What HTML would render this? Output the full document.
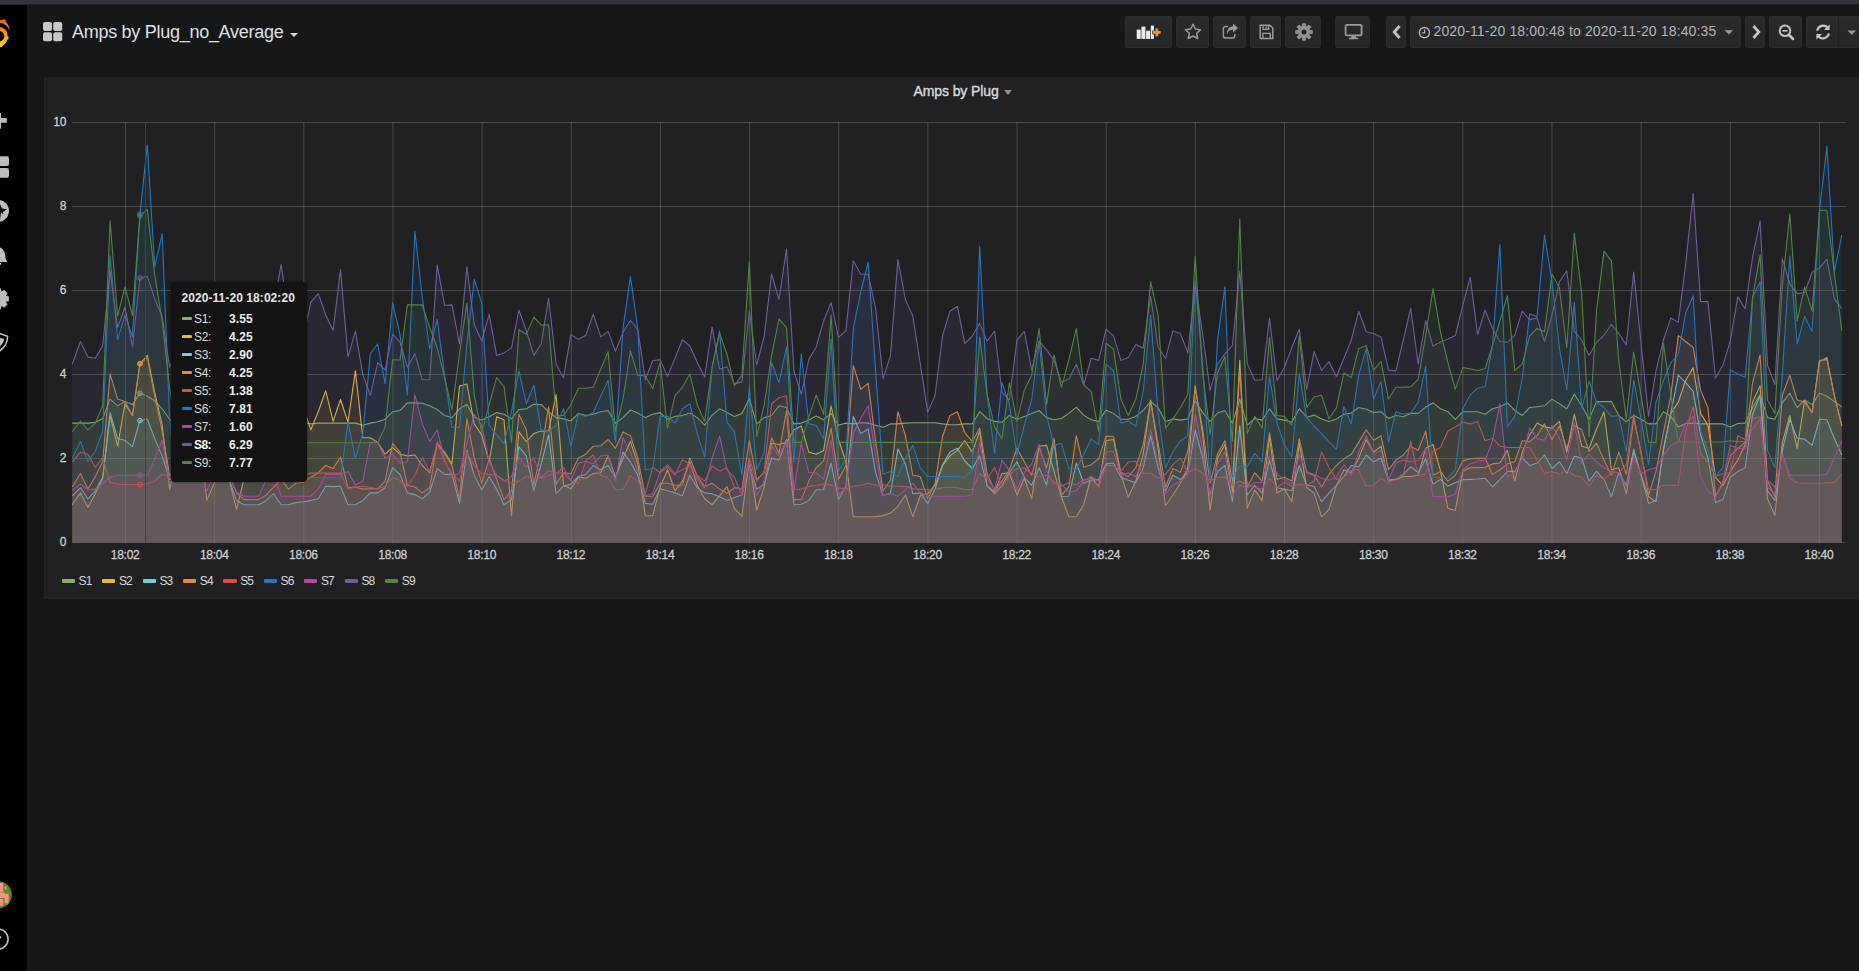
<!DOCTYPE html>
<html lang="en">
<head>
<meta charset="utf-8">
<title>Amps by Plug_no_Average - Grafana</title>
<style>
*{box-sizing:border-box;margin:0;padding:0}
html,body{width:1859px;height:971px;overflow:hidden;background:#161719;font-family:"Liberation Sans",sans-serif;color:#d8d9da}
.abs{position:absolute}
#topstrip{position:absolute;left:0;top:0;width:1859px;height:5px;background:#34353a;border-bottom:1px solid #232428}
#side{position:absolute;left:0;top:5px;width:27px;height:966px;background:#000;overflow:hidden}
#side svg{position:absolute;left:0;top:-5px}
#nav-title{position:absolute;left:72px;top:21px;font-size:18px;line-height:22px;color:#dfe0e1;white-space:nowrap;letter-spacing:-0.28px}
.caret{position:absolute;width:0;height:0;border-left:4px solid transparent;border-right:4px solid transparent;border-top:4px solid #d8d9da}
.btn{position:absolute;top:16px;height:32px;border-radius:2px;background:linear-gradient(180deg,#2b2b2e,#262629);border:1px solid #2c2c30}
.btn svg{position:absolute;left:0;top:-0.7px}
#tp-text{position:absolute;left:22.5px;top:5px;font-size:14px;line-height:18px;color:#b4b5b8;white-space:nowrap;letter-spacing:0.13px}
#panel{position:absolute;left:44px;top:77px;width:1830px;height:522px;background:#212124;border:1px solid #242427;border-top-color:#202023;border-radius:0}
#ptitle{position:absolute;left:913.5px;top:83px;font-size:14px;line-height:17px;font-weight:normal;-webkit-text-stroke:0.38px #dadbdc;color:#dadbdc;white-space:nowrap;letter-spacing:-0.1px}
.chart{position:absolute;left:0;top:0}
.lg{position:absolute;top:574px;height:15px;white-space:nowrap}
.lg i{position:absolute;left:-0.3px;top:5.2px;width:13.4px;height:3.7px;border-radius:1px}
.lg span{position:absolute;left:16.6px;top:0;font-size:12px;line-height:15px;color:#d8d9da;letter-spacing:-0.9px}
.tip{position:absolute;left:171px;top:282px;width:136px;height:200px;background:#141414;border-radius:4px;box-shadow:0 0 3px rgba(0,0,0,.5)}
.tt{position:absolute;left:10.5px;top:8px;font-size:12px;line-height:16px;font-weight:bold;color:#e6e6e6;white-space:nowrap;letter-spacing:0.07px}
.tr{position:absolute;left:0;width:136px;height:18px}
.tr i{position:absolute;left:11px;top:7px;width:10px;height:3px;border-radius:1px}
.tr span{position:absolute;left:23px;top:1px;font-size:12px;line-height:16px;color:#d8d9da;letter-spacing:-0.3px}
.tr span.hl{font-weight:bold;color:#fff;letter-spacing:-0.6px}
.tr b{position:absolute;left:58px;top:1px;font-size:12px;line-height:16px;color:#ececec;letter-spacing:0.1px}
</style>
</head>
<body>
<div id="topstrip"></div>

<!-- side menu (cropped by viewport in the original capture) -->
<div id="side">
<svg width="27" height="971" viewBox="0 0 27 971">
  <defs>
    <linearGradient id="lg1" gradientUnits="userSpaceOnUse" x1="0" y1="47" x2="0" y2="19">
      <stop offset="0" stop-color="#fdd216"/><stop offset="0.5" stop-color="#f7941d"/><stop offset="1" stop-color="#f05a28"/>
    </linearGradient>
  </defs>
  <!-- grafana logo, right part -->
  <path d="M-3 26.6 C2 26.6 6 29 7.1 32.4 L7.5 35.4 L9 37.8 L6.9 40.4 C6.2 42.8 4.6 44.4 3.1 45.3 L1.8 47 L-3 47.3 L-3 42.3 C1.5 41.6 4.3 39.6 4.3 36.6 C4.3 33 1 30.2 -3 30 Z" fill="url(#lg1)"/>
  <path d="M-3 19.9 L2.4 19.9 L5 19.1 L6 22 C8 24.4 9.3 27 9.6 30.4 C8 27.2 5.5 24.2 2 23.1 L-3 22.9 Z" fill="url(#lg1)"/>
  <!-- plus -->
  <path d="M-8 118 h14.8 v4.7 h-14.8z M-3.4 113 h4.5 v15.7 h-4.5z" fill="#bdbdbd"/>
  <!-- dashboards squares -->
  <rect x="-10" y="156.2" width="19" height="9.7" rx="2" fill="#bdbdbd"/>
  <rect x="-10" y="168" width="19" height="9.7" rx="2" fill="#bdbdbd"/>
  <!-- compass -->
  <circle cx="-2.1" cy="210.8" r="11.1" fill="#bdbdbd"/>
  <path d="M0.2 204.6 L2 208.6 L7 209.2 L2.8 212 L3.8 214.8 L1 212.6 L0 220.6 L-3 212 L-6 210 L-1.5 208.8 Z" fill="#0a0a0a"/>
  <!-- bell -->
  <path d="M-6 246 C1.5 246 4.8 250 5.3 256 C5.5 259 6 260.2 7 261 V262 H-8 Z" fill="#bdbdbd"/>
  <rect x="-3" y="263" width="4" height="1.8" fill="#bdbdbd"/>
  <!-- cog -->
  <g transform="translate(-1.5 298.8)" fill="#bdbdbd">
    <circle r="7.8"/>
    <path d="M-2.4 -10.4 h4.8 l0.8 4 h-6.4z" transform="rotate(0)"/><path d="M-2.4 -10.4 h4.8 l0.8 4 h-6.4z" transform="rotate(45)"/><path d="M-2.4 -10.4 h4.8 l0.8 4 h-6.4z" transform="rotate(90)"/><path d="M-2.4 -10.4 h4.8 l0.8 4 h-6.4z" transform="rotate(135)"/><path d="M-2.4 -10.4 h4.8 l0.8 4 h-6.4z" transform="rotate(180)"/>
  </g>
  <!-- shield -->
  <path d="M-6 331.6 L7.6 336.2 C7.6 343.5 4 349 -4 353.4" fill="none" stroke="#bdbdbd" stroke-width="1.5"/>
  <path d="M-6 336.6 L4.2 338.8 C3.8 342.6 1.6 345.4 -3 348.6 z" fill="#bdbdbd"/>
  <!-- avatar -->
  <clipPath id="av"><circle cx="-2" cy="894.8" r="13.8"/></clipPath>
  <g clip-path="url(#av)">
    <rect x="-16" y="880" width="29" height="30" fill="#5c8a1a"/>
    <path d="M0 883 h3.2 v9 h-3.2z M4.6 893.8 h4 v9.4 h-4z M0 892.5 h4.6 v5.5 h-4.6z M-3 899 h6.2 v7 h-6.2z M-5 886 h3.4 v10 h-3.4z M4.6 886.5 h2 v3 h-2z" fill="#ff8d84"/>
  </g>
  <!-- help -->
  <circle cx="-1.9" cy="939.1" r="10" fill="none" stroke="#bdbdbd" stroke-width="1.6"/>
  <circle cx="-0.4" cy="937.2" r="1.5" fill="#bdbdbd"/>
</svg>
</div>

<!-- navbar -->
<svg class="abs" style="left:43px;top:22px" width="20" height="20" viewBox="0 0 20 20">
  <g fill="#c8c8c8"><rect x="0" y="0" width="9" height="9" rx="2"/><rect x="10.2" y="0" width="9" height="9" rx="2"/><rect x="0" y="10.2" width="9" height="9" rx="2"/><rect x="10.2" y="10.2" width="9" height="9" rx="2"/></g>
</svg>
<div id="nav-title">Amps by Plug_no_Average</div>
<div class="caret" style="left:290px;top:33px"></div>

<!-- add panel -->
<div class="btn" style="left:1125px;width:47px">
<svg width="47" height="32" viewBox="0 0 47 32">
  <g fill="#e9e9e9" transform="translate(-0.5 0)"><rect x="11.2" y="13.6" width="4" height="9.3"/><rect x="15.9" y="10.6" width="4" height="12.3"/><rect x="20.6" y="14.7" width="4" height="8.2"/><rect x="25.3" y="9.6" width="3.2" height="13.3"/></g>
  <path d="M27 15.1 h2.5 v-2.5 h2.7 v2.5 h2.5 v2.7 h-2.5 v2.5 h-2.7 v-2.5 h-2.5z" fill="#f79520" stroke="#28282b" stroke-width="1.4" paint-order="stroke"/>
</svg></div>
<!-- star -->
<div class="btn" style="left:1176px;width:33px">
<svg width="33" height="32" viewBox="0 0 33 32">
  <path d="M16 8.2 L18.3 13 L23.5 13.7 L19.7 17.3 L20.7 22.5 L16 20 L11.3 22.5 L12.3 17.3 L8.5 13.7 L13.7 13 Z" fill="none" stroke="#9a9b9e" stroke-width="1.5" stroke-linejoin="round"/>
</svg></div>
<!-- share -->
<div class="btn" style="left:1213px;width:33px">
<svg width="33" height="32" viewBox="0 0 33 32">
  <path d="M13.5 10.4 H11.6 a2.2 2.2 0 0 0 -2.2 2.2 V19.8 a2.2 2.2 0 0 0 2.2 2.2 H18.6 a2.2 2.2 0 0 0 2.2 -2.2 V18.6" fill="none" stroke="#9a9b9e" stroke-width="1.5" stroke-linecap="round"/>
  <path d="M19 7.6 L24 12 L19 16.4 V13.8 C16 13.8 14 15 13 18.4 C12.6 14 15 10.4 19 10.2 Z" fill="#9a9b9e"/>
</svg></div>
<!-- save -->
<div class="btn" style="left:1250px;width:31px">
<svg width="31" height="32" viewBox="0 0 31 32">
  <path d="M9.2 9.2 H19 L21.8 12 V22.4 H9.2 Z" fill="none" stroke="#9a9b9e" stroke-width="1.5" stroke-linejoin="round"/>
  <path d="M12 9.4 V13.4 H17.6 V9.4 M15.2 10.4 v2" fill="none" stroke="#9a9b9e" stroke-width="1.4"/>
  <path d="M11.8 22.2 V17.4 H19.2 V22.2" fill="none" stroke="#9a9b9e" stroke-width="1.4"/>
</svg></div>
<!-- cog -->
<div class="btn" style="left:1285px;width:36px">
<svg width="36" height="32" viewBox="0 0 36 32">
  <g transform="translate(18 16)">
    <g fill="#8e8f92">
      <circle r="6.2"/>
      <rect x="-1.9" y="-8.8" width="3.8" height="4" rx="0.6" transform="rotate(0)"/><rect x="-1.9" y="-8.8" width="3.8" height="4" rx="0.6" transform="rotate(45)"/><rect x="-1.9" y="-8.8" width="3.8" height="4" rx="0.6" transform="rotate(90)"/><rect x="-1.9" y="-8.8" width="3.8" height="4" rx="0.6" transform="rotate(135)"/><rect x="-1.9" y="-8.8" width="3.8" height="4" rx="0.6" transform="rotate(180)"/><rect x="-1.9" y="-8.8" width="3.8" height="4" rx="0.6" transform="rotate(225)"/><rect x="-1.9" y="-8.8" width="3.8" height="4" rx="0.6" transform="rotate(270)"/><rect x="-1.9" y="-8.8" width="3.8" height="4" rx="0.6" transform="rotate(315)"/>
    </g>
    <circle r="2.5" fill="#28282b"/>
  </g>
</svg></div>
<!-- tv -->
<div class="btn" style="left:1335px;width:35px">
<svg width="35" height="32" viewBox="0 0 35 32">
  <rect x="9.6" y="8.8" width="16" height="10.6" rx="1.2" fill="none" stroke="#9a9b9e" stroke-width="1.8"/>
  <path d="M15.6 19.6 h4 l0.6 2.2 h2 v1.4 h-9.2 v-1.4 h2 z" fill="#9a9b9e"/>
</svg></div>
<!-- left -->
<div class="btn" style="left:1386px;width:20px">
<svg width="20" height="32" viewBox="0 0 20 32">
  <path d="M12.6 10 L7.2 16 L12.6 22" fill="none" stroke="#c3c4c6" stroke-width="2.8"/>
</svg></div>
<!-- time picker -->
<div class="btn" style="left:1410px;width:331px">
<svg width="331" height="32" viewBox="0 0 331 32">
  <circle cx="13.4" cy="16.6" r="5.1" fill="none" stroke="#b4b5b8" stroke-width="1.4"/>
  <path d="M13.6 13.4 V16.8 H11" fill="none" stroke="#b4b5b8" stroke-width="1.2"/>
  <path d="M313.6 14.2 h8.4 l-4.2 4.4z" fill="#9a9b9e"/>
</svg>
<div id="tp-text">2020-11-20 18:00:48 to 2020-11-20 18:40:35</div>
</div>
<!-- right -->
<div class="btn" style="left:1745px;width:20px">
<svg width="20" height="32" viewBox="0 0 20 32">
  <path d="M7.4 10 L12.8 16 L7.4 22" fill="none" stroke="#c3c4c6" stroke-width="2.8"/>
</svg></div>
<!-- zoom out -->
<div class="btn" style="left:1769px;width:33px">
<svg width="33" height="32" viewBox="0 0 33 32">
  <circle cx="15" cy="14.8" r="5.3" fill="none" stroke="#c3c4c6" stroke-width="2"/>
  <path d="M12.4 14.8 h5.2" stroke="#c3c4c6" stroke-width="1.6"/>
  <path d="M19 19 L23 23" stroke="#c3c4c6" stroke-width="2.6" stroke-linecap="round"/>
</svg></div>
<!-- refresh -->
<div class="btn" style="left:1806px;width:60px;border-radius:2px 0 0 2px">
<svg width="60" height="32" viewBox="0 0 60 32">
  <path d="M10.2 14.6 A6 6 0 0 1 20.6 11.6" fill="none" stroke="#c3c4c6" stroke-width="2.2"/>
  <path d="M22.6 8.4 V14 H17 Z" fill="#c3c4c6"/>
  <path d="M21.8 17.4 A6 6 0 0 1 11.4 20.4" fill="none" stroke="#c3c4c6" stroke-width="2.2"/>
  <path d="M9.4 23.6 V18 H15 Z" fill="#c3c4c6"/>
  <rect x="31" y="0" width="1" height="32" fill="#202023"/>
  <path d="M40.6 14.4 h8.4 l-4.2 4.4z" fill="#9a9b9e"/>
</svg></div>

<!-- panel -->
<div id="panel"></div>
<div id="ptitle">Amps by Plug</div>
<div class="caret" style="left:1003.7px;top:90px;border-left-width:4.8px;border-right-width:4.8px;border-top:5px solid #8e8e8e"></div>
<svg class="chart" width="1859" height="971" viewBox="0 0 1859 971">
<g stroke="#ffffff" stroke-opacity="0.19" stroke-width="1" shape-rendering="auto"><line x1="72.0" y1="122.5" x2="1846.0" y2="122.5"/><line x1="72.0" y1="206.5" x2="1846.0" y2="206.5"/><line x1="72.0" y1="290.5" x2="1846.0" y2="290.5"/><line x1="72.0" y1="374.5" x2="1846.0" y2="374.5"/><line x1="72.0" y1="458.5" x2="1846.0" y2="458.5"/><line x1="72.0" y1="542.5" x2="1846.0" y2="542.5"/><line x1="125.50" y1="122" x2="125.50" y2="543"/><line x1="214.66" y1="122" x2="214.66" y2="543"/><line x1="303.81" y1="122" x2="303.81" y2="543"/><line x1="392.97" y1="122" x2="392.97" y2="543"/><line x1="482.12" y1="122" x2="482.12" y2="543"/><line x1="571.27" y1="122" x2="571.27" y2="543"/><line x1="660.43" y1="122" x2="660.43" y2="543"/><line x1="749.59" y1="122" x2="749.59" y2="543"/><line x1="838.74" y1="122" x2="838.74" y2="543"/><line x1="927.89" y1="122" x2="927.89" y2="543"/><line x1="1017.05" y1="122" x2="1017.05" y2="543"/><line x1="1106.20" y1="122" x2="1106.20" y2="543"/><line x1="1195.36" y1="122" x2="1195.36" y2="543"/><line x1="1284.52" y1="122" x2="1284.52" y2="543"/><line x1="1373.67" y1="122" x2="1373.67" y2="543"/><line x1="1462.83" y1="122" x2="1462.83" y2="543"/><line x1="1551.98" y1="122" x2="1551.98" y2="543"/><line x1="1641.13" y1="122" x2="1641.13" y2="543"/><line x1="1730.29" y1="122" x2="1730.29" y2="543"/><line x1="1819.44" y1="122" x2="1819.44" y2="543"/></g>
<clipPath id="pc"><rect x="72.0" y="118" width="1774.0" height="425"/></clipPath>
<g clip-path="url(#pc)" fill="none" stroke-width="1.1" stroke-linejoin="round">
<polygon points="72.2,542.5 72.2,423.1 80.4,423.1 87.9,423.1 95.3,422.2 102.7,418.5 110.1,399.1 117.6,405.8 125.0,401.6 132.4,404.6 139.9,393.2 147.3,396.2 154.7,400.8 162.2,408.8 169.6,419.3 177.0,422.7 184.5,422.7 191.9,422.7 199.3,422.7 206.8,422.7 214.2,422.7 221.6,422.7 229.1,422.7 236.5,422.7 243.9,422.7 251.4,422.7 258.8,422.7 266.2,422.7 273.7,422.7 281.1,422.7 288.5,422.7 295.9,422.7 303.4,422.7 310.8,423.9 318.2,423.1 325.7,423.1 333.1,423.1 340.5,423.1 348.0,423.1 355.4,423.1 362.8,425.2 370.3,423.1 377.7,421.8 385.1,419.3 392.6,411.7 400.0,410.5 407.4,402.9 414.9,402.9 422.3,403.3 429.7,405.8 437.2,409.6 444.6,415.5 452.0,417.6 459.5,408.8 466.9,404.6 474.3,417.6 481.7,420.1 489.2,416.8 496.6,412.6 504.0,414.2 511.5,418.9 518.9,409.6 526.3,408.8 533.8,404.2 541.2,404.6 548.6,411.7 556.1,417.6 563.5,418.9 570.9,421.0 578.4,413.4 585.8,415.5 593.2,414.2 600.7,411.7 608.1,410.5 615.5,423.1 623.0,417.6 630.4,410.0 637.8,413.0 645.3,417.6 652.7,414.2 660.1,412.6 667.5,419.3 675.0,416.4 682.4,415.5 689.8,413.0 697.3,417.6 704.7,425.2 712.1,415.1 719.6,408.8 727.0,412.6 734.4,416.4 741.9,413.4 749.3,399.1 756.7,423.9 764.2,417.6 771.6,415.5 779.0,405.8 786.5,407.5 793.9,423.9 801.3,423.1 808.8,420.1 816.2,415.9 823.6,419.7 831.1,413.4 838.5,425.2 845.9,423.1 853.3,423.9 860.8,422.7 868.2,423.1 875.6,425.2 883.1,427.3 890.5,423.9 897.9,423.9 905.4,423.1 912.8,422.7 920.2,422.7 927.7,422.7 935.1,422.7 942.5,423.9 950.0,424.8 957.4,424.8 964.8,423.9 972.3,423.9 979.7,411.7 987.1,418.5 994.6,421.4 1002.0,422.2 1009.4,415.5 1016.9,419.3 1024.3,416.4 1031.7,413.4 1039.1,410.5 1046.6,417.6 1054.0,419.7 1061.4,418.5 1068.9,413.4 1076.3,407.1 1083.7,415.1 1091.2,419.7 1098.6,421.4 1106.0,410.0 1113.5,413.4 1120.9,419.3 1128.3,419.3 1135.8,416.4 1143.2,410.5 1150.6,401.6 1158.1,407.5 1165.5,421.4 1172.9,418.9 1180.4,420.1 1187.8,418.9 1195.2,400.8 1202.7,412.6 1210.1,421.4 1217.5,413.0 1224.9,410.5 1232.4,423.1 1239.8,399.1 1247.2,425.2 1254.7,418.5 1262.1,420.1 1269.5,408.8 1277.0,418.9 1284.4,420.1 1291.8,422.2 1299.3,408.8 1306.7,417.2 1314.1,415.1 1321.6,418.9 1329.0,421.4 1336.4,418.9 1343.9,414.2 1351.3,413.0 1358.7,407.5 1366.2,409.2 1373.6,412.6 1381.0,411.7 1388.5,418.5 1395.9,415.5 1403.3,416.8 1410.7,413.4 1418.2,413.4 1425.6,407.1 1433.0,402.9 1440.5,408.8 1447.9,411.7 1455.3,419.3 1462.8,411.7 1470.2,411.7 1477.6,411.7 1485.1,414.2 1492.5,408.8 1499.9,406.7 1507.4,402.9 1514.8,410.5 1522.2,415.5 1529.7,407.5 1537.1,406.7 1544.5,405.8 1552.0,399.1 1559.4,403.7 1566.8,408.8 1574.3,394.1 1581.7,405.8 1589.1,419.3 1596.5,401.6 1604.0,401.6 1611.4,401.6 1618.8,415.5 1626.3,421.8 1633.7,415.5 1641.1,419.3 1648.6,423.9 1656.0,423.9 1663.4,411.7 1670.9,416.4 1678.3,426.9 1685.7,423.5 1693.2,423.1 1700.6,423.9 1708.0,423.9 1715.5,423.9 1722.9,423.9 1730.3,426.9 1737.8,423.5 1745.2,423.1 1752.6,407.5 1760.1,394.9 1767.5,417.6 1774.9,419.3 1782.3,402.9 1789.8,393.2 1797.2,407.5 1804.6,400.0 1812.1,404.6 1819.5,393.2 1826.9,396.2 1834.4,401.6 1841.8,406.7 1841.8,542.5" fill="#7EB26D" fill-opacity="0.105" stroke="none"/>
<polyline points="72.2,423.1 80.4,423.1 87.9,423.1 95.3,422.2 102.7,418.5 110.1,399.1 117.6,405.8 125.0,401.6 132.4,404.6 139.9,393.2 147.3,396.2 154.7,400.8 162.2,408.8 169.6,419.3 177.0,422.7 184.5,422.7 191.9,422.7 199.3,422.7 206.8,422.7 214.2,422.7 221.6,422.7 229.1,422.7 236.5,422.7 243.9,422.7 251.4,422.7 258.8,422.7 266.2,422.7 273.7,422.7 281.1,422.7 288.5,422.7 295.9,422.7 303.4,422.7 310.8,423.9 318.2,423.1 325.7,423.1 333.1,423.1 340.5,423.1 348.0,423.1 355.4,423.1 362.8,425.2 370.3,423.1 377.7,421.8 385.1,419.3 392.6,411.7 400.0,410.5 407.4,402.9 414.9,402.9 422.3,403.3 429.7,405.8 437.2,409.6 444.6,415.5 452.0,417.6 459.5,408.8 466.9,404.6 474.3,417.6 481.7,420.1 489.2,416.8 496.6,412.6 504.0,414.2 511.5,418.9 518.9,409.6 526.3,408.8 533.8,404.2 541.2,404.6 548.6,411.7 556.1,417.6 563.5,418.9 570.9,421.0 578.4,413.4 585.8,415.5 593.2,414.2 600.7,411.7 608.1,410.5 615.5,423.1 623.0,417.6 630.4,410.0 637.8,413.0 645.3,417.6 652.7,414.2 660.1,412.6 667.5,419.3 675.0,416.4 682.4,415.5 689.8,413.0 697.3,417.6 704.7,425.2 712.1,415.1 719.6,408.8 727.0,412.6 734.4,416.4 741.9,413.4 749.3,399.1 756.7,423.9 764.2,417.6 771.6,415.5 779.0,405.8 786.5,407.5 793.9,423.9 801.3,423.1 808.8,420.1 816.2,415.9 823.6,419.7 831.1,413.4 838.5,425.2 845.9,423.1 853.3,423.9 860.8,422.7 868.2,423.1 875.6,425.2 883.1,427.3 890.5,423.9 897.9,423.9 905.4,423.1 912.8,422.7 920.2,422.7 927.7,422.7 935.1,422.7 942.5,423.9 950.0,424.8 957.4,424.8 964.8,423.9 972.3,423.9 979.7,411.7 987.1,418.5 994.6,421.4 1002.0,422.2 1009.4,415.5 1016.9,419.3 1024.3,416.4 1031.7,413.4 1039.1,410.5 1046.6,417.6 1054.0,419.7 1061.4,418.5 1068.9,413.4 1076.3,407.1 1083.7,415.1 1091.2,419.7 1098.6,421.4 1106.0,410.0 1113.5,413.4 1120.9,419.3 1128.3,419.3 1135.8,416.4 1143.2,410.5 1150.6,401.6 1158.1,407.5 1165.5,421.4 1172.9,418.9 1180.4,420.1 1187.8,418.9 1195.2,400.8 1202.7,412.6 1210.1,421.4 1217.5,413.0 1224.9,410.5 1232.4,423.1 1239.8,399.1 1247.2,425.2 1254.7,418.5 1262.1,420.1 1269.5,408.8 1277.0,418.9 1284.4,420.1 1291.8,422.2 1299.3,408.8 1306.7,417.2 1314.1,415.1 1321.6,418.9 1329.0,421.4 1336.4,418.9 1343.9,414.2 1351.3,413.0 1358.7,407.5 1366.2,409.2 1373.6,412.6 1381.0,411.7 1388.5,418.5 1395.9,415.5 1403.3,416.8 1410.7,413.4 1418.2,413.4 1425.6,407.1 1433.0,402.9 1440.5,408.8 1447.9,411.7 1455.3,419.3 1462.8,411.7 1470.2,411.7 1477.6,411.7 1485.1,414.2 1492.5,408.8 1499.9,406.7 1507.4,402.9 1514.8,410.5 1522.2,415.5 1529.7,407.5 1537.1,406.7 1544.5,405.8 1552.0,399.1 1559.4,403.7 1566.8,408.8 1574.3,394.1 1581.7,405.8 1589.1,419.3 1596.5,401.6 1604.0,401.6 1611.4,401.6 1618.8,415.5 1626.3,421.8 1633.7,415.5 1641.1,419.3 1648.6,423.9 1656.0,423.9 1663.4,411.7 1670.9,416.4 1678.3,426.9 1685.7,423.5 1693.2,423.1 1700.6,423.9 1708.0,423.9 1715.5,423.9 1722.9,423.9 1730.3,426.9 1737.8,423.5 1745.2,423.1 1752.6,407.5 1760.1,394.9 1767.5,417.6 1774.9,419.3 1782.3,402.9 1789.8,393.2 1797.2,407.5 1804.6,400.0 1812.1,404.6 1819.5,393.2 1826.9,396.2 1834.4,401.6 1841.8,406.7" stroke="#7EB26D"/>
<polygon points="72.2,542.5 72.2,504.7 80.4,492.9 87.9,507.2 95.3,493.7 102.7,478.2 110.1,415.5 117.6,446.2 125.0,403.7 132.4,415.5 139.9,363.8 147.3,355.4 154.7,392.0 162.2,425.2 169.6,489.1 177.0,458.4 184.5,437.4 191.9,450.0 199.3,433.2 206.8,500.4 214.2,483.2 221.6,437.4 229.1,479.4 236.5,509.3 243.9,479.4 251.4,424.8 258.8,416.4 266.2,433.2 273.7,412.1 281.1,429.0 288.5,403.7 295.9,420.6 303.4,407.9 310.8,429.8 318.2,411.7 325.7,390.7 333.1,421.4 340.5,399.5 348.0,422.2 355.4,370.9 362.8,437.8 370.3,437.8 377.7,442.4 385.1,454.2 392.6,447.5 400.0,454.2 407.4,455.9 414.9,455.0 422.3,465.5 429.7,472.7 437.2,444.5 444.6,452.1 452.0,463.9 459.5,386.1 466.9,384.0 474.3,423.9 481.7,434.9 489.2,461.8 496.6,416.8 504.0,419.7 511.5,516.0 518.9,431.9 526.3,441.6 533.8,433.6 541.2,431.1 548.6,431.1 556.1,394.5 563.5,484.9 570.9,488.7 578.4,476.9 585.8,478.2 593.2,473.5 600.7,472.7 608.1,455.9 615.5,477.3 623.0,458.0 630.4,441.6 637.8,463.9 645.3,516.0 652.7,515.6 660.1,487.0 667.5,469.8 675.0,490.8 682.4,481.1 689.8,461.8 697.3,485.3 704.7,498.8 712.1,504.7 719.6,495.8 727.0,486.6 734.4,508.4 741.9,516.4 749.3,460.1 756.7,510.1 764.2,487.0 771.6,443.3 779.0,444.5 786.5,442.4 793.9,429.8 801.3,426.0 808.8,452.1 816.2,454.2 823.6,450.4 831.1,405.8 838.5,439.5 845.9,461.8 853.3,516.8 860.8,516.8 868.2,516.8 875.6,516.8 883.1,515.6 890.5,513.1 897.9,506.3 905.4,495.0 912.8,516.8 920.2,495.8 927.7,493.7 935.1,485.3 942.5,465.5 950.0,455.9 957.4,450.4 964.8,440.7 972.3,452.1 979.7,431.1 987.1,485.3 994.6,492.0 1002.0,473.5 1009.4,472.7 1016.9,495.0 1024.3,478.2 1031.7,498.8 1039.1,446.2 1046.6,445.4 1054.0,471.4 1061.4,496.7 1068.9,516.8 1076.3,516.8 1083.7,504.7 1091.2,476.5 1098.6,487.0 1106.0,440.7 1113.5,439.5 1120.9,474.4 1128.3,497.1 1135.8,481.1 1143.2,454.2 1150.6,400.0 1158.1,448.3 1165.5,505.5 1172.9,495.0 1180.4,483.2 1187.8,467.7 1195.2,385.7 1202.7,434.9 1210.1,510.1 1217.5,458.0 1224.9,444.5 1232.4,492.9 1239.8,360.4 1247.2,508.4 1254.7,489.9 1262.1,500.4 1269.5,436.5 1277.0,492.9 1284.4,489.1 1291.8,501.7 1299.3,443.3 1306.7,487.8 1314.1,492.9 1321.6,516.8 1329.0,509.3 1336.4,485.3 1343.9,469.8 1351.3,472.7 1358.7,458.0 1366.2,439.5 1373.6,452.1 1381.0,446.2 1388.5,480.3 1395.9,479.4 1403.3,476.5 1410.7,476.5 1418.2,475.2 1425.6,448.3 1433.0,444.5 1440.5,470.6 1447.9,508.4 1455.3,510.5 1462.8,471.0 1470.2,467.7 1477.6,467.7 1485.1,467.2 1492.5,463.9 1499.9,463.0 1507.4,450.4 1514.8,481.1 1522.2,452.1 1529.7,434.9 1537.1,423.1 1544.5,426.9 1552.0,428.1 1559.4,421.4 1566.8,452.1 1574.3,414.2 1581.7,446.2 1589.1,448.3 1596.5,429.0 1604.0,411.7 1611.4,469.8 1618.8,467.7 1626.3,493.7 1633.7,451.3 1641.1,475.2 1648.6,496.7 1656.0,501.7 1663.4,448.3 1670.9,413.4 1678.3,402.1 1685.7,380.2 1693.2,367.6 1700.6,413.4 1708.0,425.2 1715.5,477.3 1722.9,485.3 1730.3,471.4 1737.8,460.1 1745.2,444.5 1752.6,402.1 1760.1,385.7 1767.5,498.8 1774.9,515.2 1782.3,442.4 1789.8,415.5 1797.2,448.3 1804.6,400.4 1812.1,412.6 1819.5,361.7 1826.9,357.5 1834.4,396.2 1841.8,426.0 1841.8,542.5" fill="#EAB839" fill-opacity="0.105" stroke="none"/>
<polyline points="72.2,504.7 80.4,492.9 87.9,507.2 95.3,493.7 102.7,478.2 110.1,415.5 117.6,446.2 125.0,403.7 132.4,415.5 139.9,363.8 147.3,355.4 154.7,392.0 162.2,425.2 169.6,489.1 177.0,458.4 184.5,437.4 191.9,450.0 199.3,433.2 206.8,500.4 214.2,483.2 221.6,437.4 229.1,479.4 236.5,509.3 243.9,479.4 251.4,424.8 258.8,416.4 266.2,433.2 273.7,412.1 281.1,429.0 288.5,403.7 295.9,420.6 303.4,407.9 310.8,429.8 318.2,411.7 325.7,390.7 333.1,421.4 340.5,399.5 348.0,422.2 355.4,370.9 362.8,437.8 370.3,437.8 377.7,442.4 385.1,454.2 392.6,447.5 400.0,454.2 407.4,455.9 414.9,455.0 422.3,465.5 429.7,472.7 437.2,444.5 444.6,452.1 452.0,463.9 459.5,386.1 466.9,384.0 474.3,423.9 481.7,434.9 489.2,461.8 496.6,416.8 504.0,419.7 511.5,516.0 518.9,431.9 526.3,441.6 533.8,433.6 541.2,431.1 548.6,431.1 556.1,394.5 563.5,484.9 570.9,488.7 578.4,476.9 585.8,478.2 593.2,473.5 600.7,472.7 608.1,455.9 615.5,477.3 623.0,458.0 630.4,441.6 637.8,463.9 645.3,516.0 652.7,515.6 660.1,487.0 667.5,469.8 675.0,490.8 682.4,481.1 689.8,461.8 697.3,485.3 704.7,498.8 712.1,504.7 719.6,495.8 727.0,486.6 734.4,508.4 741.9,516.4 749.3,460.1 756.7,510.1 764.2,487.0 771.6,443.3 779.0,444.5 786.5,442.4 793.9,429.8 801.3,426.0 808.8,452.1 816.2,454.2 823.6,450.4 831.1,405.8 838.5,439.5 845.9,461.8 853.3,516.8 860.8,516.8 868.2,516.8 875.6,516.8 883.1,515.6 890.5,513.1 897.9,506.3 905.4,495.0 912.8,516.8 920.2,495.8 927.7,493.7 935.1,485.3 942.5,465.5 950.0,455.9 957.4,450.4 964.8,440.7 972.3,452.1 979.7,431.1 987.1,485.3 994.6,492.0 1002.0,473.5 1009.4,472.7 1016.9,495.0 1024.3,478.2 1031.7,498.8 1039.1,446.2 1046.6,445.4 1054.0,471.4 1061.4,496.7 1068.9,516.8 1076.3,516.8 1083.7,504.7 1091.2,476.5 1098.6,487.0 1106.0,440.7 1113.5,439.5 1120.9,474.4 1128.3,497.1 1135.8,481.1 1143.2,454.2 1150.6,400.0 1158.1,448.3 1165.5,505.5 1172.9,495.0 1180.4,483.2 1187.8,467.7 1195.2,385.7 1202.7,434.9 1210.1,510.1 1217.5,458.0 1224.9,444.5 1232.4,492.9 1239.8,360.4 1247.2,508.4 1254.7,489.9 1262.1,500.4 1269.5,436.5 1277.0,492.9 1284.4,489.1 1291.8,501.7 1299.3,443.3 1306.7,487.8 1314.1,492.9 1321.6,516.8 1329.0,509.3 1336.4,485.3 1343.9,469.8 1351.3,472.7 1358.7,458.0 1366.2,439.5 1373.6,452.1 1381.0,446.2 1388.5,480.3 1395.9,479.4 1403.3,476.5 1410.7,476.5 1418.2,475.2 1425.6,448.3 1433.0,444.5 1440.5,470.6 1447.9,508.4 1455.3,510.5 1462.8,471.0 1470.2,467.7 1477.6,467.7 1485.1,467.2 1492.5,463.9 1499.9,463.0 1507.4,450.4 1514.8,481.1 1522.2,452.1 1529.7,434.9 1537.1,423.1 1544.5,426.9 1552.0,428.1 1559.4,421.4 1566.8,452.1 1574.3,414.2 1581.7,446.2 1589.1,448.3 1596.5,429.0 1604.0,411.7 1611.4,469.8 1618.8,467.7 1626.3,493.7 1633.7,451.3 1641.1,475.2 1648.6,496.7 1656.0,501.7 1663.4,448.3 1670.9,413.4 1678.3,402.1 1685.7,380.2 1693.2,367.6 1700.6,413.4 1708.0,425.2 1715.5,477.3 1722.9,485.3 1730.3,471.4 1737.8,460.1 1745.2,444.5 1752.6,402.1 1760.1,385.7 1767.5,498.8 1774.9,515.2 1782.3,442.4 1789.8,415.5 1797.2,448.3 1804.6,400.4 1812.1,412.6 1819.5,361.7 1826.9,357.5 1834.4,396.2 1841.8,426.0" stroke="#EAB839"/>
<polygon points="72.2,542.5 72.2,495.8 80.4,487.8 87.9,498.8 95.3,490.8 102.7,477.3 110.1,412.6 117.6,438.6 125.0,440.3 132.4,446.6 139.9,420.6 147.3,419.3 154.7,438.6 162.2,455.9 169.6,479.4 177.0,479.4 184.5,479.4 191.9,479.4 199.3,479.4 206.8,479.4 214.2,479.4 221.6,479.4 229.1,479.4 236.5,500.4 243.9,504.7 251.4,504.7 258.8,504.7 266.2,500.4 273.7,493.7 281.1,504.7 288.5,504.7 295.9,502.6 303.4,501.7 310.8,500.4 318.2,498.8 325.7,486.2 333.1,486.6 340.5,486.2 348.0,504.7 355.4,504.7 362.8,500.4 370.3,492.9 377.7,492.9 385.1,487.8 392.6,467.7 400.0,474.4 407.4,492.9 414.9,494.6 422.3,498.8 429.7,492.0 437.2,468.5 444.6,474.4 452.0,474.4 459.5,503.4 466.9,450.4 474.3,475.2 481.7,489.9 489.2,476.5 496.6,489.1 504.0,504.7 511.5,499.6 518.9,446.6 526.3,455.9 533.8,490.8 541.2,463.9 548.6,434.9 556.1,493.7 563.5,486.2 570.9,484.1 578.4,476.5 585.8,474.4 593.2,465.5 600.7,469.8 608.1,465.5 615.5,478.2 623.0,452.1 630.4,461.8 637.8,475.2 645.3,503.4 652.7,504.2 660.1,488.7 667.5,490.8 675.0,492.9 682.4,495.8 689.8,475.2 697.3,487.8 704.7,492.9 712.1,493.7 719.6,496.7 727.0,500.4 734.4,497.5 741.9,495.0 749.3,463.9 756.7,489.1 764.2,484.1 771.6,458.0 779.0,460.1 786.5,439.5 793.9,504.7 801.3,504.2 808.8,500.4 816.2,489.9 823.6,489.5 831.1,463.0 838.5,499.6 845.9,486.2 853.3,416.4 860.8,433.6 868.2,429.0 875.6,472.7 883.1,495.8 890.5,492.9 897.9,449.1 905.4,463.9 912.8,493.7 920.2,492.9 927.7,503.4 935.1,489.1 942.5,464.7 950.0,452.1 957.4,448.3 964.8,460.9 972.3,468.5 979.7,455.9 987.1,486.2 994.6,493.7 1002.0,485.3 1009.4,472.7 1016.9,461.8 1024.3,477.3 1031.7,485.3 1039.1,467.7 1046.6,485.3 1054.0,440.7 1061.4,496.7 1068.9,496.2 1076.3,463.0 1083.7,483.2 1091.2,480.3 1098.6,479.4 1106.0,463.9 1113.5,463.0 1120.9,477.3 1128.3,480.3 1135.8,482.8 1143.2,467.7 1150.6,435.7 1158.1,467.7 1165.5,490.8 1172.9,475.2 1180.4,479.4 1187.8,472.7 1195.2,429.8 1202.7,458.0 1210.1,495.0 1217.5,471.4 1224.9,465.5 1232.4,501.7 1239.8,426.0 1247.2,495.0 1254.7,485.3 1262.1,492.9 1269.5,460.1 1277.0,487.8 1284.4,489.1 1291.8,490.8 1299.3,465.5 1306.7,485.3 1314.1,486.2 1321.6,501.7 1329.0,492.9 1336.4,485.3 1343.9,476.5 1351.3,465.5 1358.7,466.8 1366.2,455.0 1373.6,461.8 1381.0,458.0 1388.5,480.3 1395.9,479.4 1403.3,474.4 1410.7,466.8 1418.2,472.7 1425.6,458.8 1433.0,484.1 1440.5,479.4 1447.9,486.2 1455.3,482.4 1462.8,479.8 1470.2,479.4 1477.6,479.0 1485.1,478.2 1492.5,487.0 1499.9,479.4 1507.4,471.4 1514.8,471.4 1522.2,458.0 1529.7,465.5 1537.1,463.0 1544.5,455.0 1552.0,468.5 1559.4,461.8 1566.8,473.5 1574.3,456.3 1581.7,458.0 1589.1,481.1 1596.5,471.4 1604.0,479.4 1611.4,496.7 1618.8,472.7 1626.3,485.3 1633.7,449.1 1641.1,475.2 1648.6,503.4 1656.0,500.4 1663.4,450.4 1670.9,412.6 1678.3,375.1 1685.7,382.7 1693.2,391.5 1700.6,434.9 1708.0,458.0 1715.5,502.6 1722.9,499.6 1730.3,477.3 1737.8,471.4 1745.2,467.7 1752.6,414.2 1760.1,395.3 1767.5,490.8 1774.9,500.4 1782.3,450.4 1789.8,419.3 1797.2,438.2 1804.6,439.1 1812.1,445.4 1819.5,419.3 1826.9,419.7 1834.4,438.6 1841.8,455.0 1841.8,542.5" fill="#6ED0E0" fill-opacity="0.105" stroke="none"/>
<polyline points="72.2,495.8 80.4,487.8 87.9,498.8 95.3,490.8 102.7,477.3 110.1,412.6 117.6,438.6 125.0,440.3 132.4,446.6 139.9,420.6 147.3,419.3 154.7,438.6 162.2,455.9 169.6,479.4 177.0,479.4 184.5,479.4 191.9,479.4 199.3,479.4 206.8,479.4 214.2,479.4 221.6,479.4 229.1,479.4 236.5,500.4 243.9,504.7 251.4,504.7 258.8,504.7 266.2,500.4 273.7,493.7 281.1,504.7 288.5,504.7 295.9,502.6 303.4,501.7 310.8,500.4 318.2,498.8 325.7,486.2 333.1,486.6 340.5,486.2 348.0,504.7 355.4,504.7 362.8,500.4 370.3,492.9 377.7,492.9 385.1,487.8 392.6,467.7 400.0,474.4 407.4,492.9 414.9,494.6 422.3,498.8 429.7,492.0 437.2,468.5 444.6,474.4 452.0,474.4 459.5,503.4 466.9,450.4 474.3,475.2 481.7,489.9 489.2,476.5 496.6,489.1 504.0,504.7 511.5,499.6 518.9,446.6 526.3,455.9 533.8,490.8 541.2,463.9 548.6,434.9 556.1,493.7 563.5,486.2 570.9,484.1 578.4,476.5 585.8,474.4 593.2,465.5 600.7,469.8 608.1,465.5 615.5,478.2 623.0,452.1 630.4,461.8 637.8,475.2 645.3,503.4 652.7,504.2 660.1,488.7 667.5,490.8 675.0,492.9 682.4,495.8 689.8,475.2 697.3,487.8 704.7,492.9 712.1,493.7 719.6,496.7 727.0,500.4 734.4,497.5 741.9,495.0 749.3,463.9 756.7,489.1 764.2,484.1 771.6,458.0 779.0,460.1 786.5,439.5 793.9,504.7 801.3,504.2 808.8,500.4 816.2,489.9 823.6,489.5 831.1,463.0 838.5,499.6 845.9,486.2 853.3,416.4 860.8,433.6 868.2,429.0 875.6,472.7 883.1,495.8 890.5,492.9 897.9,449.1 905.4,463.9 912.8,493.7 920.2,492.9 927.7,503.4 935.1,489.1 942.5,464.7 950.0,452.1 957.4,448.3 964.8,460.9 972.3,468.5 979.7,455.9 987.1,486.2 994.6,493.7 1002.0,485.3 1009.4,472.7 1016.9,461.8 1024.3,477.3 1031.7,485.3 1039.1,467.7 1046.6,485.3 1054.0,440.7 1061.4,496.7 1068.9,496.2 1076.3,463.0 1083.7,483.2 1091.2,480.3 1098.6,479.4 1106.0,463.9 1113.5,463.0 1120.9,477.3 1128.3,480.3 1135.8,482.8 1143.2,467.7 1150.6,435.7 1158.1,467.7 1165.5,490.8 1172.9,475.2 1180.4,479.4 1187.8,472.7 1195.2,429.8 1202.7,458.0 1210.1,495.0 1217.5,471.4 1224.9,465.5 1232.4,501.7 1239.8,426.0 1247.2,495.0 1254.7,485.3 1262.1,492.9 1269.5,460.1 1277.0,487.8 1284.4,489.1 1291.8,490.8 1299.3,465.5 1306.7,485.3 1314.1,486.2 1321.6,501.7 1329.0,492.9 1336.4,485.3 1343.9,476.5 1351.3,465.5 1358.7,466.8 1366.2,455.0 1373.6,461.8 1381.0,458.0 1388.5,480.3 1395.9,479.4 1403.3,474.4 1410.7,466.8 1418.2,472.7 1425.6,458.8 1433.0,484.1 1440.5,479.4 1447.9,486.2 1455.3,482.4 1462.8,479.8 1470.2,479.4 1477.6,479.0 1485.1,478.2 1492.5,487.0 1499.9,479.4 1507.4,471.4 1514.8,471.4 1522.2,458.0 1529.7,465.5 1537.1,463.0 1544.5,455.0 1552.0,468.5 1559.4,461.8 1566.8,473.5 1574.3,456.3 1581.7,458.0 1589.1,481.1 1596.5,471.4 1604.0,479.4 1611.4,496.7 1618.8,472.7 1626.3,485.3 1633.7,449.1 1641.1,475.2 1648.6,503.4 1656.0,500.4 1663.4,450.4 1670.9,412.6 1678.3,375.1 1685.7,382.7 1693.2,391.5 1700.6,434.9 1708.0,458.0 1715.5,502.6 1722.9,499.6 1730.3,477.3 1737.8,471.4 1745.2,467.7 1752.6,414.2 1760.1,395.3 1767.5,490.8 1774.9,500.4 1782.3,450.4 1789.8,419.3 1797.2,438.2 1804.6,439.1 1812.1,445.4 1819.5,419.3 1826.9,419.7 1834.4,438.6 1841.8,455.0" stroke="#6ED0E0"/>
<polygon points="72.2,542.5 72.2,487.0 80.4,473.5 87.9,489.1 95.3,476.5 102.7,461.8 110.1,373.9 117.6,399.1 125.0,401.6 132.4,415.5 139.9,363.8 147.3,357.5 154.7,396.2 162.2,431.1 169.6,475.2 177.0,471.0 184.5,462.6 191.9,471.0 199.3,458.4 206.8,475.2 214.2,471.0 221.6,462.6 229.1,475.2 236.5,492.9 243.9,499.6 251.4,499.6 258.8,499.6 266.2,495.0 273.7,487.0 281.1,479.4 288.5,489.1 295.9,483.2 303.4,482.4 310.8,477.3 318.2,472.7 325.7,465.5 333.1,468.5 340.5,457.1 348.0,487.8 355.4,487.0 362.8,489.1 370.3,488.7 377.7,488.7 385.1,481.1 392.6,443.3 400.0,452.1 407.4,485.3 414.9,487.0 422.3,492.9 429.7,487.8 437.2,442.4 444.6,453.4 452.0,465.5 459.5,498.8 466.9,418.9 474.3,458.0 481.7,482.8 489.2,458.8 496.6,479.4 504.0,499.6 511.5,490.8 518.9,414.2 526.3,429.8 533.8,485.3 541.2,450.4 548.6,406.7 556.1,484.1 563.5,472.7 570.9,473.5 578.4,458.0 585.8,454.2 593.2,446.2 600.7,445.8 608.1,439.5 615.5,448.3 623.0,431.9 630.4,435.7 637.8,458.0 645.3,496.2 652.7,496.2 660.1,483.2 667.5,483.2 675.0,485.3 682.4,485.3 689.8,457.6 697.3,476.5 704.7,486.6 712.1,483.2 719.6,489.1 727.0,493.3 734.4,487.8 741.9,489.1 749.3,440.7 756.7,479.4 764.2,472.7 771.6,437.8 779.0,453.4 786.5,410.5 793.9,499.6 801.3,499.6 808.8,481.1 816.2,467.7 823.6,460.9 831.1,428.1 838.5,479.4 845.9,465.5 853.3,365.5 860.8,389.4 868.2,383.1 875.6,441.6 883.1,490.8 890.5,480.3 897.9,411.7 905.4,435.7 912.8,475.2 920.2,476.5 927.7,498.8 935.1,483.2 942.5,436.5 950.0,415.5 957.4,411.7 964.8,432.7 972.3,441.6 979.7,428.1 987.1,473.5 994.6,490.8 1002.0,481.1 1009.4,469.8 1016.9,448.3 1024.3,461.8 1031.7,475.2 1039.1,447.5 1046.6,467.7 1054.0,438.6 1061.4,495.0 1068.9,487.0 1076.3,435.7 1083.7,467.2 1091.2,464.7 1098.6,458.8 1106.0,436.1 1113.5,436.5 1120.9,472.3 1128.3,476.5 1135.8,467.7 1143.2,444.5 1150.6,401.2 1158.1,443.3 1165.5,487.0 1172.9,468.5 1180.4,472.3 1187.8,451.3 1195.2,388.6 1202.7,429.0 1210.1,483.2 1217.5,454.2 1224.9,440.7 1232.4,481.1 1239.8,370.5 1247.2,487.0 1254.7,472.7 1262.1,481.1 1269.5,432.7 1277.0,479.4 1284.4,477.3 1291.8,481.1 1299.3,438.6 1306.7,472.7 1314.1,475.2 1321.6,487.0 1329.0,474.4 1336.4,465.5 1343.9,458.8 1351.3,454.2 1358.7,442.4 1366.2,429.8 1373.6,440.3 1381.0,435.7 1388.5,469.8 1395.9,460.1 1403.3,455.0 1410.7,446.2 1418.2,450.4 1425.6,431.1 1433.0,475.2 1440.5,471.4 1447.9,481.1 1455.3,475.2 1462.8,460.9 1470.2,458.8 1477.6,458.4 1485.1,458.0 1492.5,474.4 1499.9,469.8 1507.4,463.9 1514.8,461.8 1522.2,440.7 1529.7,441.6 1537.1,435.7 1544.5,423.9 1552.0,439.5 1559.4,426.0 1566.8,448.3 1574.3,425.2 1581.7,429.8 1589.1,451.3 1596.5,443.3 1604.0,460.1 1611.4,475.2 1618.8,452.1 1626.3,474.4 1633.7,418.5 1641.1,452.1 1648.6,495.0 1656.0,471.4 1663.4,432.7 1670.9,395.3 1678.3,335.6 1685.7,341.5 1693.2,347.4 1700.6,390.3 1708.0,407.9 1715.5,496.7 1722.9,483.2 1730.3,455.9 1737.8,448.3 1745.2,442.4 1752.6,382.7 1760.1,355.0 1767.5,481.1 1774.9,496.7 1782.3,395.3 1789.8,375.1 1797.2,400.0 1804.6,402.1 1812.1,412.6 1819.5,360.4 1826.9,359.6 1834.4,395.3 1841.8,425.2 1841.8,542.5" fill="#EF843C" fill-opacity="0.105" stroke="none"/>
<polyline points="72.2,487.0 80.4,473.5 87.9,489.1 95.3,476.5 102.7,461.8 110.1,373.9 117.6,399.1 125.0,401.6 132.4,415.5 139.9,363.8 147.3,357.5 154.7,396.2 162.2,431.1 169.6,475.2 177.0,471.0 184.5,462.6 191.9,471.0 199.3,458.4 206.8,475.2 214.2,471.0 221.6,462.6 229.1,475.2 236.5,492.9 243.9,499.6 251.4,499.6 258.8,499.6 266.2,495.0 273.7,487.0 281.1,479.4 288.5,489.1 295.9,483.2 303.4,482.4 310.8,477.3 318.2,472.7 325.7,465.5 333.1,468.5 340.5,457.1 348.0,487.8 355.4,487.0 362.8,489.1 370.3,488.7 377.7,488.7 385.1,481.1 392.6,443.3 400.0,452.1 407.4,485.3 414.9,487.0 422.3,492.9 429.7,487.8 437.2,442.4 444.6,453.4 452.0,465.5 459.5,498.8 466.9,418.9 474.3,458.0 481.7,482.8 489.2,458.8 496.6,479.4 504.0,499.6 511.5,490.8 518.9,414.2 526.3,429.8 533.8,485.3 541.2,450.4 548.6,406.7 556.1,484.1 563.5,472.7 570.9,473.5 578.4,458.0 585.8,454.2 593.2,446.2 600.7,445.8 608.1,439.5 615.5,448.3 623.0,431.9 630.4,435.7 637.8,458.0 645.3,496.2 652.7,496.2 660.1,483.2 667.5,483.2 675.0,485.3 682.4,485.3 689.8,457.6 697.3,476.5 704.7,486.6 712.1,483.2 719.6,489.1 727.0,493.3 734.4,487.8 741.9,489.1 749.3,440.7 756.7,479.4 764.2,472.7 771.6,437.8 779.0,453.4 786.5,410.5 793.9,499.6 801.3,499.6 808.8,481.1 816.2,467.7 823.6,460.9 831.1,428.1 838.5,479.4 845.9,465.5 853.3,365.5 860.8,389.4 868.2,383.1 875.6,441.6 883.1,490.8 890.5,480.3 897.9,411.7 905.4,435.7 912.8,475.2 920.2,476.5 927.7,498.8 935.1,483.2 942.5,436.5 950.0,415.5 957.4,411.7 964.8,432.7 972.3,441.6 979.7,428.1 987.1,473.5 994.6,490.8 1002.0,481.1 1009.4,469.8 1016.9,448.3 1024.3,461.8 1031.7,475.2 1039.1,447.5 1046.6,467.7 1054.0,438.6 1061.4,495.0 1068.9,487.0 1076.3,435.7 1083.7,467.2 1091.2,464.7 1098.6,458.8 1106.0,436.1 1113.5,436.5 1120.9,472.3 1128.3,476.5 1135.8,467.7 1143.2,444.5 1150.6,401.2 1158.1,443.3 1165.5,487.0 1172.9,468.5 1180.4,472.3 1187.8,451.3 1195.2,388.6 1202.7,429.0 1210.1,483.2 1217.5,454.2 1224.9,440.7 1232.4,481.1 1239.8,370.5 1247.2,487.0 1254.7,472.7 1262.1,481.1 1269.5,432.7 1277.0,479.4 1284.4,477.3 1291.8,481.1 1299.3,438.6 1306.7,472.7 1314.1,475.2 1321.6,487.0 1329.0,474.4 1336.4,465.5 1343.9,458.8 1351.3,454.2 1358.7,442.4 1366.2,429.8 1373.6,440.3 1381.0,435.7 1388.5,469.8 1395.9,460.1 1403.3,455.0 1410.7,446.2 1418.2,450.4 1425.6,431.1 1433.0,475.2 1440.5,471.4 1447.9,481.1 1455.3,475.2 1462.8,460.9 1470.2,458.8 1477.6,458.4 1485.1,458.0 1492.5,474.4 1499.9,469.8 1507.4,463.9 1514.8,461.8 1522.2,440.7 1529.7,441.6 1537.1,435.7 1544.5,423.9 1552.0,439.5 1559.4,426.0 1566.8,448.3 1574.3,425.2 1581.7,429.8 1589.1,451.3 1596.5,443.3 1604.0,460.1 1611.4,475.2 1618.8,452.1 1626.3,474.4 1633.7,418.5 1641.1,452.1 1648.6,495.0 1656.0,471.4 1663.4,432.7 1670.9,395.3 1678.3,335.6 1685.7,341.5 1693.2,347.4 1700.6,390.3 1708.0,407.9 1715.5,496.7 1722.9,483.2 1730.3,455.9 1737.8,448.3 1745.2,442.4 1752.6,382.7 1760.1,355.0 1767.5,481.1 1774.9,496.7 1782.3,395.3 1789.8,375.1 1797.2,400.0 1804.6,402.1 1812.1,412.6 1819.5,360.4 1826.9,359.6 1834.4,395.3 1841.8,425.2" stroke="#EF843C"/>
<polygon points="72.2,542.5 72.2,461.8 80.4,452.1 87.9,454.2 95.3,467.2 102.7,458.0 110.1,482.4 117.6,484.1 125.0,484.5 132.4,484.5 139.9,484.5 147.3,483.6 154.7,481.1 162.2,474.0 169.6,476.5 177.0,475.2 184.5,475.2 191.9,475.2 199.3,475.2 206.8,475.2 214.2,475.2 221.6,475.2 229.1,475.2 236.5,475.2 243.9,475.2 251.4,475.2 258.8,475.2 266.2,475.2 273.7,475.2 281.1,475.2 288.5,475.2 295.9,475.2 303.4,475.2 310.8,473.1 318.2,473.1 325.7,473.1 333.1,473.1 340.5,473.1 348.0,489.1 355.4,487.0 362.8,486.2 370.3,487.4 377.7,488.7 385.1,486.2 392.6,477.3 400.0,480.3 407.4,486.2 414.9,475.2 422.3,457.6 429.7,471.4 437.2,443.3 444.6,461.8 452.0,473.5 459.5,481.1 466.9,452.1 474.3,465.5 481.7,473.5 489.2,474.4 496.6,475.2 504.0,480.3 511.5,483.2 518.9,481.1 526.3,476.5 533.8,479.4 541.2,477.3 548.6,470.6 556.1,473.1 563.5,472.7 570.9,481.1 578.4,483.2 585.8,460.9 593.2,455.0 600.7,475.2 608.1,478.2 615.5,489.5 623.0,489.5 630.4,475.6 637.8,481.1 645.3,493.7 652.7,467.2 660.1,472.7 667.5,466.8 675.0,475.2 682.4,459.7 689.8,463.9 697.3,475.2 704.7,481.1 712.1,466.0 719.6,471.0 727.0,467.7 734.4,487.0 741.9,489.1 749.3,458.0 756.7,481.1 764.2,471.4 771.6,403.7 779.0,397.8 786.5,395.7 793.9,489.5 801.3,489.1 808.8,486.2 816.2,485.3 823.6,484.1 831.1,484.9 838.5,487.8 845.9,489.1 853.3,486.2 860.8,485.3 868.2,483.2 875.6,485.3 883.1,484.9 890.5,486.2 897.9,486.2 905.4,486.6 912.8,488.7 920.2,489.1 927.7,489.9 935.1,489.5 942.5,487.8 950.0,487.0 957.4,487.8 964.8,489.5 972.3,489.5 979.7,473.5 987.1,479.0 994.6,467.2 1002.0,487.0 1009.4,475.2 1016.9,468.5 1024.3,467.7 1031.7,473.5 1039.1,476.5 1046.6,475.2 1054.0,483.2 1061.4,486.2 1068.9,482.4 1076.3,484.9 1083.7,479.4 1091.2,479.0 1098.6,487.0 1106.0,465.5 1113.5,465.5 1120.9,471.4 1128.3,461.8 1135.8,461.3 1143.2,473.5 1150.6,473.1 1158.1,478.2 1165.5,474.4 1172.9,464.7 1180.4,458.0 1187.8,472.7 1195.2,468.5 1202.7,473.1 1210.1,481.1 1217.5,477.3 1224.9,476.9 1232.4,485.3 1239.8,481.1 1247.2,485.3 1254.7,487.0 1262.1,489.1 1269.5,478.2 1277.0,487.0 1284.4,482.4 1291.8,486.2 1299.3,484.1 1306.7,485.3 1314.1,481.1 1321.6,452.1 1329.0,467.7 1336.4,479.4 1343.9,477.3 1351.3,470.6 1358.7,469.8 1366.2,486.2 1373.6,485.3 1381.0,478.2 1388.5,482.4 1395.9,479.4 1403.3,474.4 1410.7,441.6 1418.2,475.2 1425.6,474.4 1433.0,451.3 1440.5,447.5 1447.9,431.1 1455.3,426.9 1462.8,422.2 1470.2,423.9 1477.6,421.4 1485.1,440.7 1492.5,438.2 1499.9,446.2 1507.4,447.5 1514.8,447.5 1522.2,447.5 1529.7,447.5 1537.1,460.1 1544.5,473.5 1552.0,471.4 1559.4,474.0 1566.8,470.6 1574.3,475.2 1581.7,477.3 1589.1,486.2 1596.5,475.2 1604.0,479.4 1611.4,472.7 1618.8,472.7 1626.3,464.7 1633.7,414.2 1641.1,454.2 1648.6,489.5 1656.0,489.5 1663.4,485.3 1670.9,485.3 1678.3,485.3 1685.7,431.1 1693.2,406.7 1700.6,454.2 1708.0,461.8 1715.5,476.5 1722.9,473.5 1730.3,472.7 1737.8,435.7 1745.2,439.5 1752.6,429.0 1760.1,418.9 1767.5,480.3 1774.9,487.0 1782.3,454.2 1789.8,478.2 1797.2,482.8 1804.6,483.2 1812.1,483.2 1819.5,483.2 1826.9,482.8 1834.4,482.4 1841.8,474.0 1841.8,542.5" fill="#E24D42" fill-opacity="0.105" stroke="none"/>
<polyline points="72.2,461.8 80.4,452.1 87.9,454.2 95.3,467.2 102.7,458.0 110.1,482.4 117.6,484.1 125.0,484.5 132.4,484.5 139.9,484.5 147.3,483.6 154.7,481.1 162.2,474.0 169.6,476.5 177.0,475.2 184.5,475.2 191.9,475.2 199.3,475.2 206.8,475.2 214.2,475.2 221.6,475.2 229.1,475.2 236.5,475.2 243.9,475.2 251.4,475.2 258.8,475.2 266.2,475.2 273.7,475.2 281.1,475.2 288.5,475.2 295.9,475.2 303.4,475.2 310.8,473.1 318.2,473.1 325.7,473.1 333.1,473.1 340.5,473.1 348.0,489.1 355.4,487.0 362.8,486.2 370.3,487.4 377.7,488.7 385.1,486.2 392.6,477.3 400.0,480.3 407.4,486.2 414.9,475.2 422.3,457.6 429.7,471.4 437.2,443.3 444.6,461.8 452.0,473.5 459.5,481.1 466.9,452.1 474.3,465.5 481.7,473.5 489.2,474.4 496.6,475.2 504.0,480.3 511.5,483.2 518.9,481.1 526.3,476.5 533.8,479.4 541.2,477.3 548.6,470.6 556.1,473.1 563.5,472.7 570.9,481.1 578.4,483.2 585.8,460.9 593.2,455.0 600.7,475.2 608.1,478.2 615.5,489.5 623.0,489.5 630.4,475.6 637.8,481.1 645.3,493.7 652.7,467.2 660.1,472.7 667.5,466.8 675.0,475.2 682.4,459.7 689.8,463.9 697.3,475.2 704.7,481.1 712.1,466.0 719.6,471.0 727.0,467.7 734.4,487.0 741.9,489.1 749.3,458.0 756.7,481.1 764.2,471.4 771.6,403.7 779.0,397.8 786.5,395.7 793.9,489.5 801.3,489.1 808.8,486.2 816.2,485.3 823.6,484.1 831.1,484.9 838.5,487.8 845.9,489.1 853.3,486.2 860.8,485.3 868.2,483.2 875.6,485.3 883.1,484.9 890.5,486.2 897.9,486.2 905.4,486.6 912.8,488.7 920.2,489.1 927.7,489.9 935.1,489.5 942.5,487.8 950.0,487.0 957.4,487.8 964.8,489.5 972.3,489.5 979.7,473.5 987.1,479.0 994.6,467.2 1002.0,487.0 1009.4,475.2 1016.9,468.5 1024.3,467.7 1031.7,473.5 1039.1,476.5 1046.6,475.2 1054.0,483.2 1061.4,486.2 1068.9,482.4 1076.3,484.9 1083.7,479.4 1091.2,479.0 1098.6,487.0 1106.0,465.5 1113.5,465.5 1120.9,471.4 1128.3,461.8 1135.8,461.3 1143.2,473.5 1150.6,473.1 1158.1,478.2 1165.5,474.4 1172.9,464.7 1180.4,458.0 1187.8,472.7 1195.2,468.5 1202.7,473.1 1210.1,481.1 1217.5,477.3 1224.9,476.9 1232.4,485.3 1239.8,481.1 1247.2,485.3 1254.7,487.0 1262.1,489.1 1269.5,478.2 1277.0,487.0 1284.4,482.4 1291.8,486.2 1299.3,484.1 1306.7,485.3 1314.1,481.1 1321.6,452.1 1329.0,467.7 1336.4,479.4 1343.9,477.3 1351.3,470.6 1358.7,469.8 1366.2,486.2 1373.6,485.3 1381.0,478.2 1388.5,482.4 1395.9,479.4 1403.3,474.4 1410.7,441.6 1418.2,475.2 1425.6,474.4 1433.0,451.3 1440.5,447.5 1447.9,431.1 1455.3,426.9 1462.8,422.2 1470.2,423.9 1477.6,421.4 1485.1,440.7 1492.5,438.2 1499.9,446.2 1507.4,447.5 1514.8,447.5 1522.2,447.5 1529.7,447.5 1537.1,460.1 1544.5,473.5 1552.0,471.4 1559.4,474.0 1566.8,470.6 1574.3,475.2 1581.7,477.3 1589.1,486.2 1596.5,475.2 1604.0,479.4 1611.4,472.7 1618.8,472.7 1626.3,464.7 1633.7,414.2 1641.1,454.2 1648.6,489.5 1656.0,489.5 1663.4,485.3 1670.9,485.3 1678.3,485.3 1685.7,431.1 1693.2,406.7 1700.6,454.2 1708.0,461.8 1715.5,476.5 1722.9,473.5 1730.3,472.7 1737.8,435.7 1745.2,439.5 1752.6,429.0 1760.1,418.9 1767.5,480.3 1774.9,487.0 1782.3,454.2 1789.8,478.2 1797.2,482.8 1804.6,483.2 1812.1,483.2 1819.5,483.2 1826.9,482.8 1834.4,482.4 1841.8,474.0" stroke="#E24D42"/>
<polygon points="72.2,542.5 72.2,458.8 80.4,441.2 87.9,461.8 95.3,451.3 102.7,431.1 110.1,255.7 117.6,339.8 125.0,315.0 132.4,336.5 139.9,214.1 147.3,145.1 154.7,266.7 162.2,233.9 169.6,420.6 177.0,477.7 184.5,477.7 191.9,477.7 199.3,477.7 206.8,477.7 214.2,477.7 221.6,477.7 229.1,477.7 236.5,477.7 243.9,477.7 251.4,477.7 258.8,477.7 266.2,477.7 273.7,477.7 281.1,477.7 288.5,477.7 295.9,477.7 303.4,477.7 310.8,477.7 318.2,477.7 325.7,477.7 333.1,477.7 340.5,477.7 348.0,422.2 355.4,458.0 362.8,433.6 370.3,353.7 377.7,344.0 385.1,383.6 392.6,302.8 400.0,334.4 407.4,395.3 414.9,231.3 422.3,297.3 429.7,348.6 437.2,319.2 444.6,375.1 452.0,427.3 459.5,427.3 466.9,344.0 474.3,279.3 481.7,303.2 489.2,425.2 496.6,434.9 504.0,443.3 511.5,411.7 518.9,370.9 526.3,403.7 533.8,385.2 541.2,429.8 548.6,431.9 556.1,425.2 563.5,408.8 570.9,446.2 578.4,413.4 585.8,416.4 593.2,412.6 600.7,396.2 608.1,380.2 615.5,442.4 623.0,328.5 630.4,276.3 637.8,328.5 645.3,469.8 652.7,468.5 660.1,416.4 667.5,416.4 675.0,423.1 682.4,408.8 689.8,403.7 697.3,433.6 704.7,457.1 712.1,367.2 719.6,331.0 727.0,422.2 734.4,431.9 741.9,475.2 749.3,387.3 756.7,469.8 764.2,452.1 771.6,362.5 779.0,382.7 786.5,347.0 793.9,461.8 801.3,353.7 808.8,423.9 816.2,425.2 823.6,438.6 831.1,339.0 838.5,471.4 845.9,458.0 853.3,328.5 860.8,291.5 868.2,262.0 875.6,370.9 883.1,474.0 890.5,471.4 897.9,476.9 905.4,458.0 912.8,445.4 920.2,467.7 927.7,476.5 935.1,476.5 942.5,476.5 950.0,476.5 957.4,476.5 964.8,477.3 972.3,469.8 979.7,246.0 987.1,395.3 994.6,453.4 1002.0,382.7 1009.4,404.2 1016.9,455.0 1024.3,425.2 1031.7,400.0 1039.1,341.1 1046.6,415.5 1054.0,445.4 1061.4,443.3 1068.9,468.5 1076.3,468.9 1083.7,454.2 1091.2,439.1 1098.6,444.5 1106.0,364.2 1113.5,370.9 1120.9,423.1 1128.3,421.0 1135.8,426.0 1143.2,391.5 1150.6,315.0 1158.1,412.6 1165.5,467.7 1172.9,452.1 1180.4,440.7 1187.8,436.1 1195.2,280.9 1202.7,365.9 1210.1,480.3 1217.5,340.2 1224.9,286.8 1232.4,477.3 1239.8,466.8 1247.2,466.8 1254.7,453.4 1262.1,461.8 1269.5,376.0 1277.0,423.1 1284.4,444.5 1291.8,457.1 1299.3,373.9 1306.7,417.6 1314.1,426.0 1321.6,433.6 1329.0,441.6 1336.4,449.1 1343.9,406.7 1351.3,423.9 1358.7,375.1 1366.2,348.6 1373.6,399.1 1381.0,381.4 1388.5,442.0 1395.9,411.7 1403.3,414.2 1410.7,413.0 1418.2,402.1 1425.6,366.3 1433.0,477.3 1440.5,477.7 1447.9,478.2 1455.3,469.8 1462.8,408.8 1470.2,394.9 1477.6,388.2 1485.1,386.5 1492.5,345.7 1499.9,244.4 1507.4,426.9 1514.8,416.4 1522.2,378.5 1529.7,313.7 1537.1,316.7 1544.5,235.1 1552.0,281.8 1559.4,347.8 1566.8,389.9 1574.3,302.4 1581.7,407.9 1589.1,381.0 1596.5,402.1 1604.0,407.5 1611.4,416.4 1618.8,415.5 1626.3,451.3 1633.7,380.2 1641.1,419.3 1648.6,464.7 1656.0,402.1 1663.4,380.6 1670.9,362.5 1678.3,354.5 1685.7,312.9 1693.2,295.7 1700.6,431.1 1708.0,450.4 1715.5,476.5 1722.9,467.7 1730.3,370.1 1737.8,373.9 1745.2,377.2 1752.6,297.3 1760.1,281.8 1767.5,450.4 1774.9,467.7 1782.3,375.1 1789.8,256.1 1797.2,344.0 1804.6,316.3 1812.1,331.4 1819.5,210.3 1826.9,146.4 1834.4,271.3 1841.8,235.1 1841.8,542.5" fill="#1F78C1" fill-opacity="0.105" stroke="none"/>
<polyline points="72.2,458.8 80.4,441.2 87.9,461.8 95.3,451.3 102.7,431.1 110.1,255.7 117.6,339.8 125.0,315.0 132.4,336.5 139.9,214.1 147.3,145.1 154.7,266.7 162.2,233.9 169.6,420.6 177.0,477.7 184.5,477.7 191.9,477.7 199.3,477.7 206.8,477.7 214.2,477.7 221.6,477.7 229.1,477.7 236.5,477.7 243.9,477.7 251.4,477.7 258.8,477.7 266.2,477.7 273.7,477.7 281.1,477.7 288.5,477.7 295.9,477.7 303.4,477.7 310.8,477.7 318.2,477.7 325.7,477.7 333.1,477.7 340.5,477.7 348.0,422.2 355.4,458.0 362.8,433.6 370.3,353.7 377.7,344.0 385.1,383.6 392.6,302.8 400.0,334.4 407.4,395.3 414.9,231.3 422.3,297.3 429.7,348.6 437.2,319.2 444.6,375.1 452.0,427.3 459.5,427.3 466.9,344.0 474.3,279.3 481.7,303.2 489.2,425.2 496.6,434.9 504.0,443.3 511.5,411.7 518.9,370.9 526.3,403.7 533.8,385.2 541.2,429.8 548.6,431.9 556.1,425.2 563.5,408.8 570.9,446.2 578.4,413.4 585.8,416.4 593.2,412.6 600.7,396.2 608.1,380.2 615.5,442.4 623.0,328.5 630.4,276.3 637.8,328.5 645.3,469.8 652.7,468.5 660.1,416.4 667.5,416.4 675.0,423.1 682.4,408.8 689.8,403.7 697.3,433.6 704.7,457.1 712.1,367.2 719.6,331.0 727.0,422.2 734.4,431.9 741.9,475.2 749.3,387.3 756.7,469.8 764.2,452.1 771.6,362.5 779.0,382.7 786.5,347.0 793.9,461.8 801.3,353.7 808.8,423.9 816.2,425.2 823.6,438.6 831.1,339.0 838.5,471.4 845.9,458.0 853.3,328.5 860.8,291.5 868.2,262.0 875.6,370.9 883.1,474.0 890.5,471.4 897.9,476.9 905.4,458.0 912.8,445.4 920.2,467.7 927.7,476.5 935.1,476.5 942.5,476.5 950.0,476.5 957.4,476.5 964.8,477.3 972.3,469.8 979.7,246.0 987.1,395.3 994.6,453.4 1002.0,382.7 1009.4,404.2 1016.9,455.0 1024.3,425.2 1031.7,400.0 1039.1,341.1 1046.6,415.5 1054.0,445.4 1061.4,443.3 1068.9,468.5 1076.3,468.9 1083.7,454.2 1091.2,439.1 1098.6,444.5 1106.0,364.2 1113.5,370.9 1120.9,423.1 1128.3,421.0 1135.8,426.0 1143.2,391.5 1150.6,315.0 1158.1,412.6 1165.5,467.7 1172.9,452.1 1180.4,440.7 1187.8,436.1 1195.2,280.9 1202.7,365.9 1210.1,480.3 1217.5,340.2 1224.9,286.8 1232.4,477.3 1239.8,466.8 1247.2,466.8 1254.7,453.4 1262.1,461.8 1269.5,376.0 1277.0,423.1 1284.4,444.5 1291.8,457.1 1299.3,373.9 1306.7,417.6 1314.1,426.0 1321.6,433.6 1329.0,441.6 1336.4,449.1 1343.9,406.7 1351.3,423.9 1358.7,375.1 1366.2,348.6 1373.6,399.1 1381.0,381.4 1388.5,442.0 1395.9,411.7 1403.3,414.2 1410.7,413.0 1418.2,402.1 1425.6,366.3 1433.0,477.3 1440.5,477.7 1447.9,478.2 1455.3,469.8 1462.8,408.8 1470.2,394.9 1477.6,388.2 1485.1,386.5 1492.5,345.7 1499.9,244.4 1507.4,426.9 1514.8,416.4 1522.2,378.5 1529.7,313.7 1537.1,316.7 1544.5,235.1 1552.0,281.8 1559.4,347.8 1566.8,389.9 1574.3,302.4 1581.7,407.9 1589.1,381.0 1596.5,402.1 1604.0,407.5 1611.4,416.4 1618.8,415.5 1626.3,451.3 1633.7,380.2 1641.1,419.3 1648.6,464.7 1656.0,402.1 1663.4,380.6 1670.9,362.5 1678.3,354.5 1685.7,312.9 1693.2,295.7 1700.6,431.1 1708.0,450.4 1715.5,476.5 1722.9,467.7 1730.3,370.1 1737.8,373.9 1745.2,377.2 1752.6,297.3 1760.1,281.8 1767.5,450.4 1774.9,467.7 1782.3,375.1 1789.8,256.1 1797.2,344.0 1804.6,316.3 1812.1,331.4 1819.5,210.3 1826.9,146.4 1834.4,271.3 1841.8,235.1" stroke="#1F78C1"/>
<polygon points="72.2,542.5 72.2,490.4 80.4,484.1 87.9,489.9 95.3,489.1 102.7,483.2 110.1,477.3 117.6,475.2 125.0,475.2 132.4,475.2 139.9,475.2 147.3,475.2 154.7,458.8 162.2,440.3 169.6,483.2 177.0,475.2 184.5,475.2 191.9,471.0 199.3,471.0 206.8,490.8 214.2,475.2 221.6,466.8 229.1,475.2 236.5,492.0 243.9,496.2 251.4,496.2 258.8,496.2 266.2,479.4 273.7,475.2 281.1,496.2 288.5,496.2 295.9,496.2 303.4,496.2 310.8,496.2 318.2,489.1 325.7,474.4 333.1,474.4 340.5,474.4 348.0,471.4 355.4,484.9 362.8,481.1 370.3,442.4 377.7,442.4 385.1,458.0 392.6,454.2 400.0,463.0 407.4,461.8 414.9,394.9 422.3,423.9 429.7,441.6 437.2,429.8 444.6,459.7 452.0,476.5 459.5,473.1 466.9,443.3 474.3,414.2 481.7,425.2 489.2,461.8 496.6,475.2 504.0,481.1 511.5,476.5 518.9,457.1 526.3,467.2 533.8,457.6 541.2,478.2 548.6,475.2 556.1,473.1 563.5,467.7 570.9,480.3 578.4,463.0 585.8,461.3 593.2,463.9 600.7,455.9 608.1,455.0 615.5,481.1 623.0,437.8 630.4,452.1 637.8,471.4 645.3,495.8 652.7,493.7 660.1,471.4 667.5,464.7 675.0,473.5 682.4,469.8 689.8,465.5 697.3,479.4 704.7,487.8 712.1,458.0 719.6,436.1 727.0,469.8 734.4,477.3 741.9,495.8 749.3,461.8 756.7,495.8 764.2,481.1 771.6,446.2 779.0,455.9 786.5,441.6 793.9,490.8 801.3,443.3 808.8,472.7 816.2,472.7 823.6,479.4 831.1,440.3 838.5,495.0 845.9,487.8 853.3,433.6 860.8,418.5 868.2,405.8 875.6,455.9 883.1,495.8 890.5,493.7 897.9,496.2 905.4,489.9 912.8,483.2 920.2,492.5 927.7,495.8 935.1,496.2 942.5,496.2 950.0,496.2 957.4,496.2 964.8,496.2 972.3,495.0 979.7,442.4 987.1,478.2 994.6,489.1 1002.0,460.1 1009.4,470.6 1016.9,489.9 1024.3,472.7 1031.7,463.9 1039.1,444.5 1046.6,471.4 1054.0,482.4 1061.4,484.1 1068.9,492.0 1076.3,490.8 1083.7,481.1 1091.2,476.5 1098.6,481.1 1106.0,452.1 1113.5,451.3 1120.9,475.2 1128.3,472.7 1135.8,476.5 1143.2,463.0 1150.6,429.0 1158.1,463.9 1165.5,493.7 1172.9,485.3 1180.4,481.1 1187.8,475.2 1195.2,414.2 1202.7,450.4 1210.1,496.7 1217.5,463.9 1224.9,452.1 1232.4,495.8 1239.8,485.3 1247.2,487.8 1254.7,482.8 1262.1,482.4 1269.5,455.9 1277.0,474.4 1284.4,479.4 1291.8,484.1 1299.3,455.0 1306.7,471.4 1314.1,474.4 1321.6,478.2 1329.0,480.3 1336.4,477.3 1343.9,464.7 1351.3,475.2 1358.7,452.1 1366.2,435.7 1373.6,453.4 1381.0,450.4 1388.5,480.3 1395.9,463.0 1403.3,460.1 1410.7,461.8 1418.2,460.5 1425.6,448.3 1433.0,496.2 1440.5,496.7 1447.9,496.7 1455.3,493.7 1462.8,469.8 1470.2,463.9 1477.6,460.9 1485.1,460.1 1492.5,440.7 1499.9,403.7 1507.4,477.3 1514.8,472.7 1522.2,458.0 1529.7,428.1 1537.1,438.6 1544.5,440.3 1552.0,426.0 1559.4,437.8 1566.8,460.1 1574.3,423.1 1581.7,463.0 1589.1,454.2 1596.5,461.8 1604.0,467.7 1611.4,471.4 1618.8,472.7 1626.3,487.0 1633.7,457.1 1641.1,473.5 1648.6,469.8 1656.0,467.7 1663.4,455.9 1670.9,445.4 1678.3,441.6 1685.7,423.1 1693.2,416.4 1700.6,477.3 1708.0,490.8 1715.5,497.1 1722.9,481.1 1730.3,445.4 1737.8,448.3 1745.2,448.3 1752.6,419.3 1760.1,416.4 1767.5,487.0 1774.9,493.7 1782.3,453.4 1789.8,475.2 1797.2,475.2 1804.6,475.2 1812.1,475.2 1819.5,475.2 1826.9,474.4 1834.4,458.0 1841.8,440.7 1841.8,542.5" fill="#BA43A9" fill-opacity="0.105" stroke="none"/>
<polyline points="72.2,490.4 80.4,484.1 87.9,489.9 95.3,489.1 102.7,483.2 110.1,477.3 117.6,475.2 125.0,475.2 132.4,475.2 139.9,475.2 147.3,475.2 154.7,458.8 162.2,440.3 169.6,483.2 177.0,475.2 184.5,475.2 191.9,471.0 199.3,471.0 206.8,490.8 214.2,475.2 221.6,466.8 229.1,475.2 236.5,492.0 243.9,496.2 251.4,496.2 258.8,496.2 266.2,479.4 273.7,475.2 281.1,496.2 288.5,496.2 295.9,496.2 303.4,496.2 310.8,496.2 318.2,489.1 325.7,474.4 333.1,474.4 340.5,474.4 348.0,471.4 355.4,484.9 362.8,481.1 370.3,442.4 377.7,442.4 385.1,458.0 392.6,454.2 400.0,463.0 407.4,461.8 414.9,394.9 422.3,423.9 429.7,441.6 437.2,429.8 444.6,459.7 452.0,476.5 459.5,473.1 466.9,443.3 474.3,414.2 481.7,425.2 489.2,461.8 496.6,475.2 504.0,481.1 511.5,476.5 518.9,457.1 526.3,467.2 533.8,457.6 541.2,478.2 548.6,475.2 556.1,473.1 563.5,467.7 570.9,480.3 578.4,463.0 585.8,461.3 593.2,463.9 600.7,455.9 608.1,455.0 615.5,481.1 623.0,437.8 630.4,452.1 637.8,471.4 645.3,495.8 652.7,493.7 660.1,471.4 667.5,464.7 675.0,473.5 682.4,469.8 689.8,465.5 697.3,479.4 704.7,487.8 712.1,458.0 719.6,436.1 727.0,469.8 734.4,477.3 741.9,495.8 749.3,461.8 756.7,495.8 764.2,481.1 771.6,446.2 779.0,455.9 786.5,441.6 793.9,490.8 801.3,443.3 808.8,472.7 816.2,472.7 823.6,479.4 831.1,440.3 838.5,495.0 845.9,487.8 853.3,433.6 860.8,418.5 868.2,405.8 875.6,455.9 883.1,495.8 890.5,493.7 897.9,496.2 905.4,489.9 912.8,483.2 920.2,492.5 927.7,495.8 935.1,496.2 942.5,496.2 950.0,496.2 957.4,496.2 964.8,496.2 972.3,495.0 979.7,442.4 987.1,478.2 994.6,489.1 1002.0,460.1 1009.4,470.6 1016.9,489.9 1024.3,472.7 1031.7,463.9 1039.1,444.5 1046.6,471.4 1054.0,482.4 1061.4,484.1 1068.9,492.0 1076.3,490.8 1083.7,481.1 1091.2,476.5 1098.6,481.1 1106.0,452.1 1113.5,451.3 1120.9,475.2 1128.3,472.7 1135.8,476.5 1143.2,463.0 1150.6,429.0 1158.1,463.9 1165.5,493.7 1172.9,485.3 1180.4,481.1 1187.8,475.2 1195.2,414.2 1202.7,450.4 1210.1,496.7 1217.5,463.9 1224.9,452.1 1232.4,495.8 1239.8,485.3 1247.2,487.8 1254.7,482.8 1262.1,482.4 1269.5,455.9 1277.0,474.4 1284.4,479.4 1291.8,484.1 1299.3,455.0 1306.7,471.4 1314.1,474.4 1321.6,478.2 1329.0,480.3 1336.4,477.3 1343.9,464.7 1351.3,475.2 1358.7,452.1 1366.2,435.7 1373.6,453.4 1381.0,450.4 1388.5,480.3 1395.9,463.0 1403.3,460.1 1410.7,461.8 1418.2,460.5 1425.6,448.3 1433.0,496.2 1440.5,496.7 1447.9,496.7 1455.3,493.7 1462.8,469.8 1470.2,463.9 1477.6,460.9 1485.1,460.1 1492.5,440.7 1499.9,403.7 1507.4,477.3 1514.8,472.7 1522.2,458.0 1529.7,428.1 1537.1,438.6 1544.5,440.3 1552.0,426.0 1559.4,437.8 1566.8,460.1 1574.3,423.1 1581.7,463.0 1589.1,454.2 1596.5,461.8 1604.0,467.7 1611.4,471.4 1618.8,472.7 1626.3,487.0 1633.7,457.1 1641.1,473.5 1648.6,469.8 1656.0,467.7 1663.4,455.9 1670.9,445.4 1678.3,441.6 1685.7,423.1 1693.2,416.4 1700.6,477.3 1708.0,490.8 1715.5,497.1 1722.9,481.1 1730.3,445.4 1737.8,448.3 1745.2,448.3 1752.6,419.3 1760.1,416.4 1767.5,487.0 1774.9,493.7 1782.3,453.4 1789.8,475.2 1797.2,475.2 1804.6,475.2 1812.1,475.2 1819.5,475.2 1826.9,474.4 1834.4,458.0 1841.8,440.7" stroke="#BA43A9"/>
<polygon points="72.2,542.5 72.2,364.2 80.4,341.5 87.9,357.1 95.3,358.3 102.7,345.7 110.1,270.9 117.6,327.6 125.0,307.0 132.4,347.0 139.9,278.0 147.3,276.3 154.7,298.6 162.2,316.7 169.6,367.2 177.0,349.1 184.5,328.0 191.9,357.5 199.3,336.5 206.8,319.6 214.2,353.3 221.6,340.7 229.1,323.8 236.5,349.1 243.9,361.7 251.4,336.5 258.8,332.2 266.2,344.9 273.7,307.0 281.1,264.5 288.5,315.4 295.9,340.7 303.4,336.5 310.8,302.4 318.2,293.6 325.7,315.0 333.1,330.6 340.5,269.6 348.0,356.6 355.4,331.4 362.8,374.3 370.3,395.3 377.7,362.5 385.1,370.1 392.6,334.4 400.0,341.9 407.4,367.2 414.9,353.7 422.3,379.8 429.7,379.8 437.2,265.0 444.6,305.3 452.0,304.9 459.5,344.0 466.9,267.1 474.3,324.7 481.7,341.1 489.2,314.2 496.6,355.4 504.0,352.9 511.5,347.8 518.9,310.0 526.3,330.6 533.8,355.4 541.2,344.0 548.6,298.2 556.1,364.2 563.5,377.7 570.9,334.4 578.4,339.4 585.8,335.2 593.2,314.2 600.7,336.9 608.1,331.4 615.5,351.2 623.0,332.2 630.4,320.5 637.8,329.3 645.3,379.8 652.7,360.8 660.1,359.6 667.5,376.4 675.0,358.3 682.4,339.8 689.8,345.7 697.3,362.5 704.7,377.2 712.1,327.2 719.6,369.3 727.0,366.7 734.4,383.6 741.9,381.9 749.3,311.2 756.7,365.0 764.2,336.0 771.6,274.2 779.0,299.5 786.5,249.0 793.9,370.9 801.3,394.5 808.8,359.6 816.2,347.0 823.6,320.9 831.1,302.4 838.5,337.3 845.9,330.6 853.3,260.8 860.8,274.2 868.2,274.2 875.6,308.3 883.1,378.9 890.5,355.4 897.9,259.5 905.4,299.5 912.8,315.9 920.2,363.4 927.7,412.1 935.1,395.3 942.5,336.0 950.0,311.2 957.4,306.2 964.8,343.6 972.3,336.0 979.7,323.4 987.1,341.1 994.6,331.0 1002.0,392.4 1009.4,400.0 1016.9,340.2 1024.3,331.4 1031.7,370.1 1039.1,341.1 1046.6,349.9 1054.0,360.4 1061.4,381.9 1068.9,378.9 1076.3,364.2 1083.7,384.8 1091.2,358.3 1098.6,360.4 1106.0,329.3 1113.5,335.6 1120.9,360.4 1128.3,357.5 1135.8,344.4 1143.2,348.2 1150.6,296.5 1158.1,347.0 1165.5,358.3 1172.9,331.0 1180.4,333.5 1187.8,352.9 1195.2,284.7 1202.7,334.4 1210.1,390.3 1217.5,364.2 1224.9,353.7 1232.4,345.7 1239.8,271.3 1247.2,363.4 1254.7,380.2 1262.1,379.8 1269.5,318.0 1277.0,380.6 1284.4,367.2 1291.8,347.8 1299.3,329.3 1306.7,389.4 1314.1,351.6 1321.6,370.5 1329.0,361.7 1336.4,376.8 1343.9,358.3 1351.3,340.2 1358.7,311.2 1366.2,331.8 1373.6,333.5 1381.0,336.9 1388.5,370.1 1395.9,370.9 1403.3,339.8 1410.7,308.3 1418.2,364.2 1425.6,320.5 1433.0,346.1 1440.5,341.9 1447.9,339.0 1455.3,335.6 1462.8,305.3 1470.2,277.2 1477.6,334.4 1485.1,310.0 1492.5,328.5 1499.9,341.5 1507.4,342.3 1514.8,335.2 1522.2,311.2 1529.7,319.6 1537.1,318.0 1544.5,341.5 1552.0,315.0 1559.4,281.8 1566.8,270.9 1574.3,331.4 1581.7,340.2 1589.1,355.4 1596.5,342.3 1604.0,335.2 1611.4,324.3 1618.8,333.5 1626.3,344.9 1633.7,272.1 1641.1,344.0 1648.6,416.4 1656.0,370.9 1663.4,340.2 1670.9,318.0 1678.3,322.2 1685.7,263.7 1693.2,193.5 1700.6,301.6 1708.0,301.6 1715.5,378.5 1722.9,365.0 1730.3,341.1 1737.8,296.9 1745.2,308.7 1752.6,257.0 1760.1,220.8 1767.5,365.0 1774.9,384.8 1782.3,258.7 1789.8,283.9 1797.2,293.6 1804.6,292.7 1812.1,272.5 1819.5,267.9 1826.9,259.1 1834.4,298.6 1841.8,308.7 1841.8,542.5" fill="#705DA0" fill-opacity="0.105" stroke="none"/>
<polyline points="72.2,364.2 80.4,341.5 87.9,357.1 95.3,358.3 102.7,345.7 110.1,270.9 117.6,327.6 125.0,307.0 132.4,347.0 139.9,278.0 147.3,276.3 154.7,298.6 162.2,316.7 169.6,367.2 177.0,349.1 184.5,328.0 191.9,357.5 199.3,336.5 206.8,319.6 214.2,353.3 221.6,340.7 229.1,323.8 236.5,349.1 243.9,361.7 251.4,336.5 258.8,332.2 266.2,344.9 273.7,307.0 281.1,264.5 288.5,315.4 295.9,340.7 303.4,336.5 310.8,302.4 318.2,293.6 325.7,315.0 333.1,330.6 340.5,269.6 348.0,356.6 355.4,331.4 362.8,374.3 370.3,395.3 377.7,362.5 385.1,370.1 392.6,334.4 400.0,341.9 407.4,367.2 414.9,353.7 422.3,379.8 429.7,379.8 437.2,265.0 444.6,305.3 452.0,304.9 459.5,344.0 466.9,267.1 474.3,324.7 481.7,341.1 489.2,314.2 496.6,355.4 504.0,352.9 511.5,347.8 518.9,310.0 526.3,330.6 533.8,355.4 541.2,344.0 548.6,298.2 556.1,364.2 563.5,377.7 570.9,334.4 578.4,339.4 585.8,335.2 593.2,314.2 600.7,336.9 608.1,331.4 615.5,351.2 623.0,332.2 630.4,320.5 637.8,329.3 645.3,379.8 652.7,360.8 660.1,359.6 667.5,376.4 675.0,358.3 682.4,339.8 689.8,345.7 697.3,362.5 704.7,377.2 712.1,327.2 719.6,369.3 727.0,366.7 734.4,383.6 741.9,381.9 749.3,311.2 756.7,365.0 764.2,336.0 771.6,274.2 779.0,299.5 786.5,249.0 793.9,370.9 801.3,394.5 808.8,359.6 816.2,347.0 823.6,320.9 831.1,302.4 838.5,337.3 845.9,330.6 853.3,260.8 860.8,274.2 868.2,274.2 875.6,308.3 883.1,378.9 890.5,355.4 897.9,259.5 905.4,299.5 912.8,315.9 920.2,363.4 927.7,412.1 935.1,395.3 942.5,336.0 950.0,311.2 957.4,306.2 964.8,343.6 972.3,336.0 979.7,323.4 987.1,341.1 994.6,331.0 1002.0,392.4 1009.4,400.0 1016.9,340.2 1024.3,331.4 1031.7,370.1 1039.1,341.1 1046.6,349.9 1054.0,360.4 1061.4,381.9 1068.9,378.9 1076.3,364.2 1083.7,384.8 1091.2,358.3 1098.6,360.4 1106.0,329.3 1113.5,335.6 1120.9,360.4 1128.3,357.5 1135.8,344.4 1143.2,348.2 1150.6,296.5 1158.1,347.0 1165.5,358.3 1172.9,331.0 1180.4,333.5 1187.8,352.9 1195.2,284.7 1202.7,334.4 1210.1,390.3 1217.5,364.2 1224.9,353.7 1232.4,345.7 1239.8,271.3 1247.2,363.4 1254.7,380.2 1262.1,379.8 1269.5,318.0 1277.0,380.6 1284.4,367.2 1291.8,347.8 1299.3,329.3 1306.7,389.4 1314.1,351.6 1321.6,370.5 1329.0,361.7 1336.4,376.8 1343.9,358.3 1351.3,340.2 1358.7,311.2 1366.2,331.8 1373.6,333.5 1381.0,336.9 1388.5,370.1 1395.9,370.9 1403.3,339.8 1410.7,308.3 1418.2,364.2 1425.6,320.5 1433.0,346.1 1440.5,341.9 1447.9,339.0 1455.3,335.6 1462.8,305.3 1470.2,277.2 1477.6,334.4 1485.1,310.0 1492.5,328.5 1499.9,341.5 1507.4,342.3 1514.8,335.2 1522.2,311.2 1529.7,319.6 1537.1,318.0 1544.5,341.5 1552.0,315.0 1559.4,281.8 1566.8,270.9 1574.3,331.4 1581.7,340.2 1589.1,355.4 1596.5,342.3 1604.0,335.2 1611.4,324.3 1618.8,333.5 1626.3,344.9 1633.7,272.1 1641.1,344.0 1648.6,416.4 1656.0,370.9 1663.4,340.2 1670.9,318.0 1678.3,322.2 1685.7,263.7 1693.2,193.5 1700.6,301.6 1708.0,301.6 1715.5,378.5 1722.9,365.0 1730.3,341.1 1737.8,296.9 1745.2,308.7 1752.6,257.0 1760.1,220.8 1767.5,365.0 1774.9,384.8 1782.3,258.7 1789.8,283.9 1797.2,293.6 1804.6,292.7 1812.1,272.5 1819.5,267.9 1826.9,259.1 1834.4,298.6 1841.8,308.7" stroke="#705DA0"/>
<polygon points="72.2,542.5 72.2,431.9 80.4,421.0 87.9,429.8 95.3,423.1 102.7,405.8 110.1,220.8 117.6,315.9 125.0,286.8 132.4,315.4 139.9,215.8 147.3,209.5 154.7,275.1 162.2,320.9 169.6,388.6 177.0,433.2 184.5,442.8 191.9,442.8 199.3,442.8 206.8,442.8 214.2,442.8 221.6,442.8 229.1,442.8 236.5,442.8 243.9,442.8 251.4,442.8 258.8,442.8 266.2,442.8 273.7,442.8 281.1,442.8 288.5,442.8 295.9,442.8 303.4,442.8 310.8,442.8 318.2,442.8 325.7,442.8 333.1,442.8 340.5,442.8 348.0,442.8 355.4,442.8 362.8,442.8 370.3,442.8 377.7,442.8 385.1,426.9 392.6,359.6 400.0,360.0 407.4,304.9 414.9,304.9 422.3,304.9 429.7,327.6 437.2,347.8 444.6,377.7 452.0,409.6 459.5,353.7 466.9,303.2 474.3,395.3 481.7,432.7 489.2,404.6 496.6,377.7 504.0,386.5 511.5,442.4 518.9,329.7 526.3,334.4 533.8,317.1 541.2,325.1 548.6,324.7 556.1,415.5 563.5,415.5 570.9,404.6 578.4,388.2 585.8,388.2 593.2,387.3 600.7,369.3 608.1,351.6 615.5,431.1 623.0,399.1 630.4,350.8 637.8,375.1 645.3,376.0 652.7,388.6 660.1,362.5 667.5,428.1 675.0,395.7 682.4,387.3 689.8,373.9 697.3,405.0 704.7,421.4 712.1,367.2 719.6,333.1 727.0,354.5 734.4,385.7 741.9,375.1 749.3,261.6 756.7,436.5 764.2,405.0 771.6,355.4 779.0,318.8 786.5,327.6 793.9,442.4 801.3,442.4 808.8,417.2 816.2,394.9 823.6,414.2 831.1,315.0 838.5,442.4 845.9,442.4 853.3,442.4 860.8,442.4 868.2,442.4 875.6,442.4 883.1,442.4 890.5,442.4 897.9,442.4 905.4,442.4 912.8,442.4 920.2,442.4 927.7,442.4 935.1,442.4 942.5,442.4 950.0,442.4 957.4,442.4 964.8,442.4 972.3,442.4 979.7,337.3 987.1,394.5 994.6,426.9 1002.0,438.6 1009.4,382.7 1016.9,421.4 1024.3,390.3 1031.7,375.1 1039.1,328.5 1046.6,404.2 1054.0,354.5 1061.4,387.3 1068.9,359.6 1076.3,328.5 1083.7,384.8 1091.2,391.5 1098.6,431.1 1106.0,343.2 1113.5,349.1 1120.9,399.1 1128.3,415.5 1135.8,399.1 1143.2,364.2 1150.6,281.8 1158.1,315.0 1165.5,428.1 1172.9,418.9 1180.4,407.5 1187.8,394.5 1195.2,256.6 1202.7,373.0 1210.1,434.9 1217.5,373.0 1224.9,356.6 1232.4,441.6 1239.8,219.1 1247.2,433.6 1254.7,416.4 1262.1,428.1 1269.5,337.3 1277.0,415.5 1284.4,416.4 1291.8,425.2 1299.3,336.0 1306.7,407.5 1314.1,397.0 1321.6,395.3 1329.0,418.5 1336.4,407.9 1343.9,373.0 1351.3,377.7 1358.7,348.6 1366.2,345.7 1373.6,370.1 1381.0,361.7 1388.5,399.1 1395.9,387.3 1403.3,387.3 1410.7,386.9 1418.2,379.3 1425.6,336.0 1433.0,288.9 1440.5,332.2 1447.9,362.5 1455.3,389.4 1462.8,367.6 1470.2,368.8 1477.6,370.5 1485.1,368.8 1492.5,345.7 1499.9,320.9 1507.4,295.7 1514.8,370.5 1522.2,364.2 1529.7,336.0 1537.1,328.5 1544.5,331.8 1552.0,274.2 1559.4,287.7 1566.8,347.8 1574.3,233.0 1581.7,293.6 1589.1,436.5 1596.5,311.2 1604.0,251.1 1611.4,260.8 1618.8,361.3 1626.3,419.3 1633.7,352.0 1641.1,395.3 1648.6,442.4 1656.0,442.4 1663.4,343.2 1670.9,395.3 1678.3,441.6 1685.7,442.0 1693.2,442.0 1700.6,442.0 1708.0,442.0 1715.5,442.0 1722.9,442.0 1730.3,440.7 1737.8,441.6 1745.2,441.6 1752.6,297.3 1760.1,254.9 1767.5,400.0 1774.9,413.4 1782.3,286.0 1789.8,213.7 1797.2,320.9 1804.6,286.8 1812.1,311.2 1819.5,210.3 1826.9,210.3 1834.4,273.8 1841.8,330.6 1841.8,542.5" fill="#508642" fill-opacity="0.105" stroke="none"/>
<polyline points="72.2,431.9 80.4,421.0 87.9,429.8 95.3,423.1 102.7,405.8 110.1,220.8 117.6,315.9 125.0,286.8 132.4,315.4 139.9,215.8 147.3,209.5 154.7,275.1 162.2,320.9 169.6,388.6 177.0,433.2 184.5,442.8 191.9,442.8 199.3,442.8 206.8,442.8 214.2,442.8 221.6,442.8 229.1,442.8 236.5,442.8 243.9,442.8 251.4,442.8 258.8,442.8 266.2,442.8 273.7,442.8 281.1,442.8 288.5,442.8 295.9,442.8 303.4,442.8 310.8,442.8 318.2,442.8 325.7,442.8 333.1,442.8 340.5,442.8 348.0,442.8 355.4,442.8 362.8,442.8 370.3,442.8 377.7,442.8 385.1,426.9 392.6,359.6 400.0,360.0 407.4,304.9 414.9,304.9 422.3,304.9 429.7,327.6 437.2,347.8 444.6,377.7 452.0,409.6 459.5,353.7 466.9,303.2 474.3,395.3 481.7,432.7 489.2,404.6 496.6,377.7 504.0,386.5 511.5,442.4 518.9,329.7 526.3,334.4 533.8,317.1 541.2,325.1 548.6,324.7 556.1,415.5 563.5,415.5 570.9,404.6 578.4,388.2 585.8,388.2 593.2,387.3 600.7,369.3 608.1,351.6 615.5,431.1 623.0,399.1 630.4,350.8 637.8,375.1 645.3,376.0 652.7,388.6 660.1,362.5 667.5,428.1 675.0,395.7 682.4,387.3 689.8,373.9 697.3,405.0 704.7,421.4 712.1,367.2 719.6,333.1 727.0,354.5 734.4,385.7 741.9,375.1 749.3,261.6 756.7,436.5 764.2,405.0 771.6,355.4 779.0,318.8 786.5,327.6 793.9,442.4 801.3,442.4 808.8,417.2 816.2,394.9 823.6,414.2 831.1,315.0 838.5,442.4 845.9,442.4 853.3,442.4 860.8,442.4 868.2,442.4 875.6,442.4 883.1,442.4 890.5,442.4 897.9,442.4 905.4,442.4 912.8,442.4 920.2,442.4 927.7,442.4 935.1,442.4 942.5,442.4 950.0,442.4 957.4,442.4 964.8,442.4 972.3,442.4 979.7,337.3 987.1,394.5 994.6,426.9 1002.0,438.6 1009.4,382.7 1016.9,421.4 1024.3,390.3 1031.7,375.1 1039.1,328.5 1046.6,404.2 1054.0,354.5 1061.4,387.3 1068.9,359.6 1076.3,328.5 1083.7,384.8 1091.2,391.5 1098.6,431.1 1106.0,343.2 1113.5,349.1 1120.9,399.1 1128.3,415.5 1135.8,399.1 1143.2,364.2 1150.6,281.8 1158.1,315.0 1165.5,428.1 1172.9,418.9 1180.4,407.5 1187.8,394.5 1195.2,256.6 1202.7,373.0 1210.1,434.9 1217.5,373.0 1224.9,356.6 1232.4,441.6 1239.8,219.1 1247.2,433.6 1254.7,416.4 1262.1,428.1 1269.5,337.3 1277.0,415.5 1284.4,416.4 1291.8,425.2 1299.3,336.0 1306.7,407.5 1314.1,397.0 1321.6,395.3 1329.0,418.5 1336.4,407.9 1343.9,373.0 1351.3,377.7 1358.7,348.6 1366.2,345.7 1373.6,370.1 1381.0,361.7 1388.5,399.1 1395.9,387.3 1403.3,387.3 1410.7,386.9 1418.2,379.3 1425.6,336.0 1433.0,288.9 1440.5,332.2 1447.9,362.5 1455.3,389.4 1462.8,367.6 1470.2,368.8 1477.6,370.5 1485.1,368.8 1492.5,345.7 1499.9,320.9 1507.4,295.7 1514.8,370.5 1522.2,364.2 1529.7,336.0 1537.1,328.5 1544.5,331.8 1552.0,274.2 1559.4,287.7 1566.8,347.8 1574.3,233.0 1581.7,293.6 1589.1,436.5 1596.5,311.2 1604.0,251.1 1611.4,260.8 1618.8,361.3 1626.3,419.3 1633.7,352.0 1641.1,395.3 1648.6,442.4 1656.0,442.4 1663.4,343.2 1670.9,395.3 1678.3,441.6 1685.7,442.0 1693.2,442.0 1700.6,442.0 1708.0,442.0 1715.5,442.0 1722.9,442.0 1730.3,440.7 1737.8,441.6 1745.2,441.6 1752.6,297.3 1760.1,254.9 1767.5,400.0 1774.9,413.4 1782.3,286.0 1789.8,213.7 1797.2,320.9 1804.6,286.8 1812.1,311.2 1819.5,210.3 1826.9,210.3 1834.4,273.8 1841.8,330.6" stroke="#508642"/>
</g>
<circle cx="139.9" cy="393.2" r="2.3" fill="#7EB26D" fill-opacity="0.3" stroke="#7EB26D" stroke-width="1"/>
<circle cx="139.9" cy="363.8" r="2.3" fill="#EAB839" fill-opacity="0.3" stroke="#EAB839" stroke-width="1"/>
<circle cx="139.9" cy="420.6" r="2.3" fill="#6ED0E0" fill-opacity="0.3" stroke="#6ED0E0" stroke-width="1"/>
<circle cx="139.9" cy="363.8" r="2.3" fill="#EF843C" fill-opacity="0.3" stroke="#EF843C" stroke-width="1"/>
<circle cx="139.9" cy="484.5" r="2.3" fill="#E24D42" fill-opacity="0.3" stroke="#E24D42" stroke-width="1"/>
<circle cx="139.9" cy="214.1" r="2.3" fill="#1F78C1" fill-opacity="0.3" stroke="#1F78C1" stroke-width="1"/>
<circle cx="139.9" cy="475.2" r="2.3" fill="#BA43A9" fill-opacity="0.3" stroke="#BA43A9" stroke-width="1"/>
<circle cx="139.9" cy="278.0" r="2.3" fill="#705DA0" fill-opacity="0.3" stroke="#705DA0" stroke-width="1"/>
<circle cx="139.9" cy="215.8" r="2.3" fill="#508642" fill-opacity="0.3" stroke="#508642" stroke-width="1"/>
<rect x="145" y="122" width="1" height="421" fill="#a8161b"/>
<g font-family="Liberation Sans, sans-serif" font-size="12" fill="#cdcdcd" stroke="#cdcdcd" stroke-width="0.3">
<text x="66.5" y="125.9" text-anchor="end">10</text>
<text x="66.5" y="209.9" text-anchor="end">8</text>
<text x="66.5" y="293.9" text-anchor="end">6</text>
<text x="66.5" y="377.9" text-anchor="end">4</text>
<text x="66.5" y="461.9" text-anchor="end">2</text>
<text x="66.5" y="545.9" text-anchor="end">0</text>
<text x="125.1" y="559.3" text-anchor="middle" letter-spacing="-0.25">18:02</text>
<text x="214.3" y="559.3" text-anchor="middle" letter-spacing="-0.25">18:04</text>
<text x="303.4" y="559.3" text-anchor="middle" letter-spacing="-0.25">18:06</text>
<text x="392.6" y="559.3" text-anchor="middle" letter-spacing="-0.25">18:08</text>
<text x="481.7" y="559.3" text-anchor="middle" letter-spacing="-0.25">18:10</text>
<text x="570.9" y="559.3" text-anchor="middle" letter-spacing="-0.25">18:12</text>
<text x="660.0" y="559.3" text-anchor="middle" letter-spacing="-0.25">18:14</text>
<text x="749.2" y="559.3" text-anchor="middle" letter-spacing="-0.25">18:16</text>
<text x="838.3" y="559.3" text-anchor="middle" letter-spacing="-0.25">18:18</text>
<text x="927.5" y="559.3" text-anchor="middle" letter-spacing="-0.25">18:20</text>
<text x="1016.6" y="559.3" text-anchor="middle" letter-spacing="-0.25">18:22</text>
<text x="1105.8" y="559.3" text-anchor="middle" letter-spacing="-0.25">18:24</text>
<text x="1195.0" y="559.3" text-anchor="middle" letter-spacing="-0.25">18:26</text>
<text x="1284.1" y="559.3" text-anchor="middle" letter-spacing="-0.25">18:28</text>
<text x="1373.3" y="559.3" text-anchor="middle" letter-spacing="-0.25">18:30</text>
<text x="1462.4" y="559.3" text-anchor="middle" letter-spacing="-0.25">18:32</text>
<text x="1551.6" y="559.3" text-anchor="middle" letter-spacing="-0.25">18:34</text>
<text x="1640.7" y="559.3" text-anchor="middle" letter-spacing="-0.25">18:36</text>
<text x="1729.9" y="559.3" text-anchor="middle" letter-spacing="-0.25">18:38</text>
<text x="1819.0" y="559.3" text-anchor="middle" letter-spacing="-0.25">18:40</text>
</g>
</svg>
<div class="lg" style="left:62.0px"><i style="background:#7EB26D"></i><span>S1</span></div>
<div class="lg" style="left:102.4px"><i style="background:#EAB839"></i><span>S2</span></div>
<div class="lg" style="left:142.8px"><i style="background:#6ED0E0"></i><span>S3</span></div>
<div class="lg" style="left:183.2px"><i style="background:#EF843C"></i><span>S4</span></div>
<div class="lg" style="left:223.6px"><i style="background:#E24D42"></i><span>S5</span></div>
<div class="lg" style="left:264.0px"><i style="background:#1F78C1"></i><span>S6</span></div>
<div class="lg" style="left:304.4px"><i style="background:#BA43A9"></i><span>S7</span></div>
<div class="lg" style="left:344.8px"><i style="background:#705DA0"></i><span>S8</span></div>
<div class="lg" style="left:385.2px"><i style="background:#508642"></i><span>S9</span></div>
<div class="tip"><div class="tt">2020-11-20 18:02:20</div><div class="tr" style="top:28px"><i style="background:#7EB26D"></i><span>S1:</span><b>3.55</b></div><div class="tr" style="top:46px"><i style="background:#EAB839"></i><span>S2:</span><b>4.25</b></div><div class="tr" style="top:64px"><i style="background:#6ED0E0"></i><span>S3:</span><b>2.90</b></div><div class="tr" style="top:82px"><i style="background:#EF843C"></i><span>S4:</span><b>4.25</b></div><div class="tr" style="top:100px"><i style="background:#E24D42"></i><span>S5:</span><b>1.38</b></div><div class="tr" style="top:118px"><i style="background:#1F78C1"></i><span>S6:</span><b>7.81</b></div><div class="tr" style="top:136px"><i style="background:#BA43A9"></i><span>S7:</span><b>1.60</b></div><div class="tr" style="top:154px"><i style="background:#705DA0"></i><span class="hl">S8:</span><b>6.29</b></div><div class="tr" style="top:172px"><i style="background:#508642"></i><span>S9:</span><b>7.77</b></div></div>
</body>
</html>
